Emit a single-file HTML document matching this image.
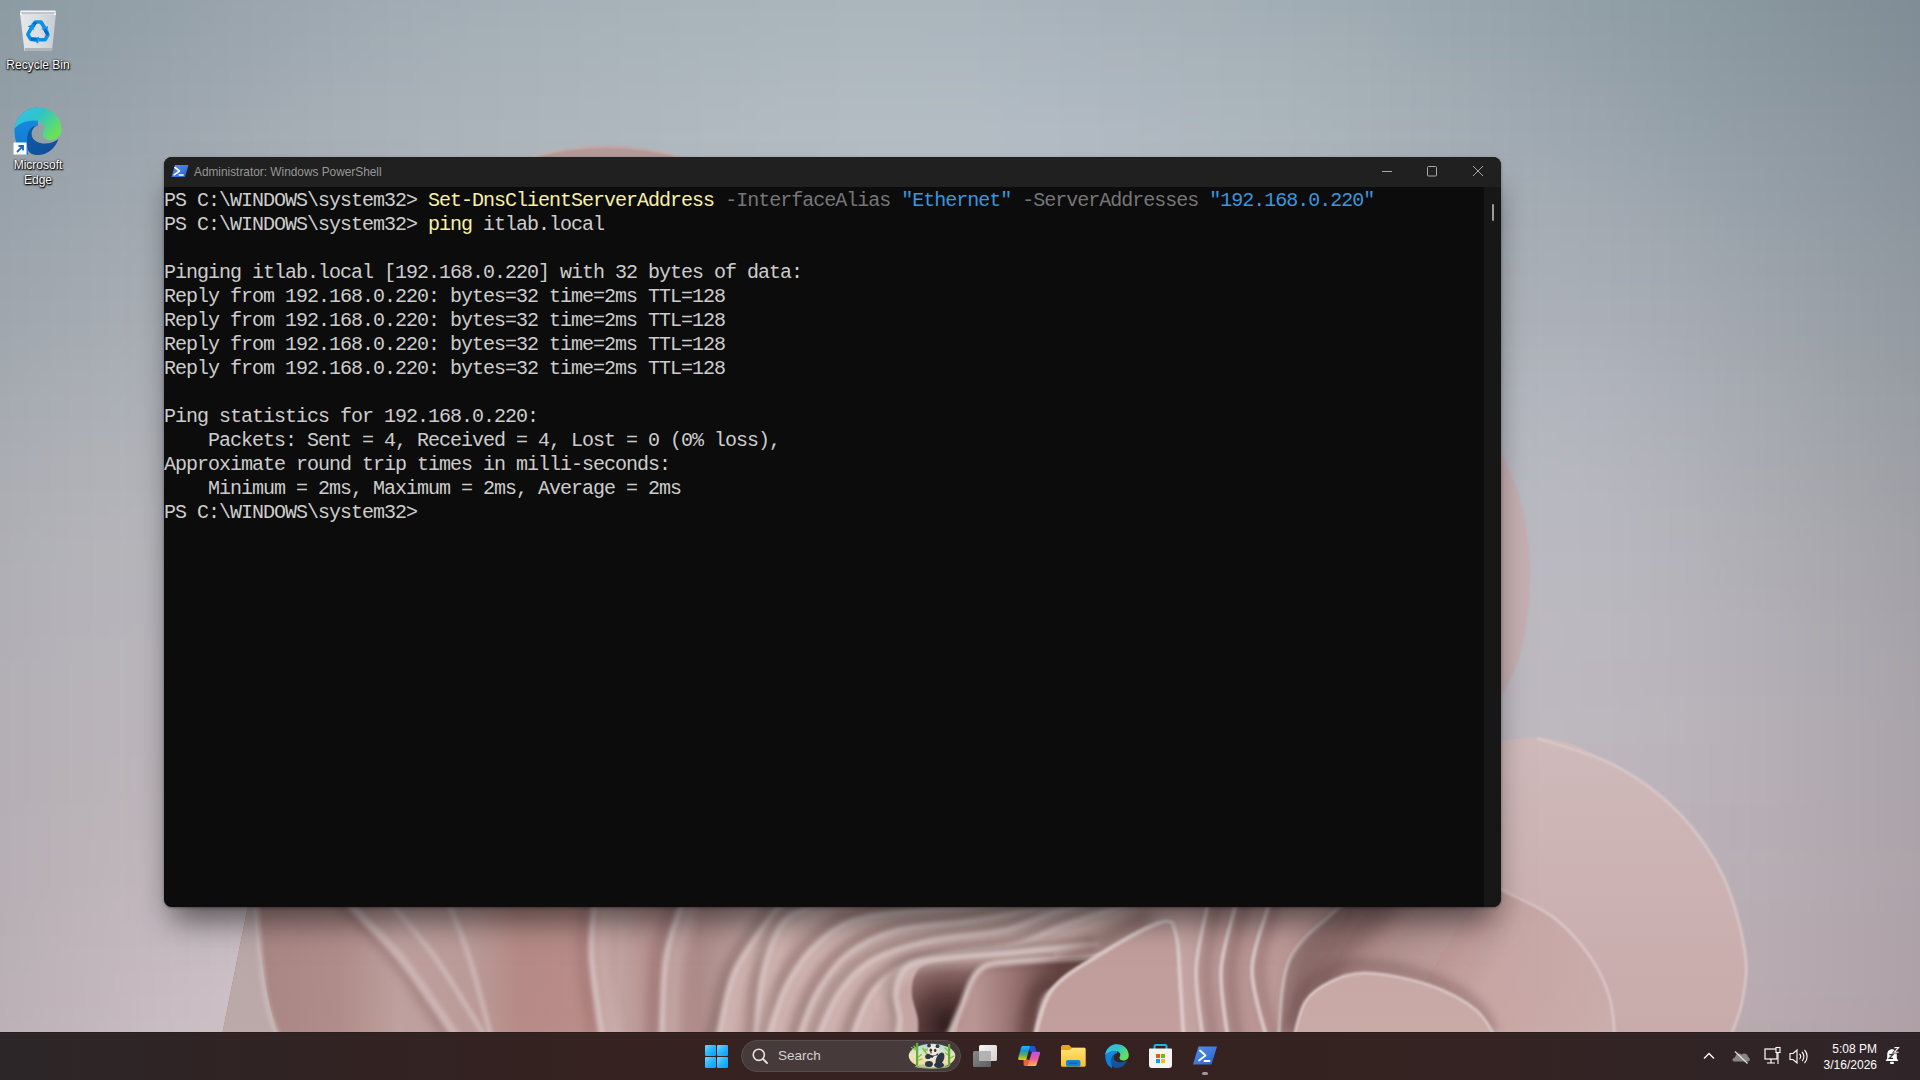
<!DOCTYPE html>
<html><head><meta charset="utf-8">
<style>
html,body{margin:0;padding:0;width:1920px;height:1080px;overflow:hidden;}
body{position:relative;font-family:"Liberation Sans",sans-serif;background:#aab2b8;}
#bgf{position:absolute;left:-80px;top:-48px;width:2080px;height:1176px;filter:blur(10px);}
#bgf div{position:absolute;left:0;width:2080px;height:12px;}
#flower{position:absolute;left:0;top:0;}
.abs{position:absolute;}
svg.abs{overflow:visible;}
/* desktop icons */
.dlabel{position:absolute;color:#fff;font-size:12px;line-height:15px;text-align:center;text-shadow:0 0 2px #000,0 1px 2px #000,1px 1px 1px rgba(0,0,0,.8);white-space:nowrap;}
/* window */
#shadow{position:absolute;left:164px;top:157px;width:1337px;height:750px;border-radius:8px;box-shadow:0 22px 30px -8px rgba(0,0,0,0.55),0 1px 3px rgba(0,0,0,0.35);}
#win{position:absolute;left:164px;top:157px;width:1337px;height:750px;border-radius:8px;overflow:hidden;background:#0c0c0c;}
#title{position:absolute;left:0;top:0;width:1337px;height:30px;background:#202020;}
#title .t{position:absolute;left:30px;top:8px;font-size:11.85px;color:#979797;white-space:nowrap;}
#term{position:absolute;left:0;top:30px;width:1320px;height:720px;background:#0c0c0c;}
#sb{position:absolute;left:1320px;top:30px;width:17px;height:720px;background:#171717;}
#thumb{position:absolute;left:8px;top:17px;width:2px;height:17px;background:#9b9b9b;border-radius:1px;}
pre{margin:0;position:absolute;left:0;top:2px;font-family:"Liberation Mono",monospace;font-size:20px;letter-spacing:-1px;line-height:24px;color:#cccccc;white-space:pre;}
.y{color:#f9f1a5}.g{color:#767676}.b{color:#3a96dd}
/* taskbar */
#taskbar{position:absolute;left:0;top:1032px;width:1920px;height:48px;background:linear-gradient(90deg,#2c2628 0px,#312323 300px,#362221 650px,#352221 1100px,#342322 1500px,#302427 1800px,#2f2529 1920px);border-top:1px solid #2b1e1e;box-sizing:border-box;}
#search{position:absolute;left:741px;top:1040px;width:220px;height:32px;box-sizing:border-box;border-radius:16px;background:#473a3a;border:1px solid #5a4c4c;}
#search .t{position:absolute;left:36px;top:7px;font-size:13.5px;color:#d6d0d0;}
.tray{position:absolute;color:#fff;font-size:12px;text-align:right;white-space:nowrap;}
</style></head>
<body>
<div id="bgf"><div style="top:0px;background:linear-gradient(90deg,#86969f 0px,#8999a1 80px,#8d9ca4 160px,#929fa8 240px,#96a2ab 320px,#9aa6af 400px,#9ea9b1 480px,#a0acb4 560px,#a2aeb5 640px,#a4afb7 720px,#a5b1b8 800px,#a6b2b9 880px,#a7b2b9 960px,#a6b2b9 1040px,#a5b0b8 1120px,#a3afb6 1200px,#a1adb5 1280px,#9eabb2 1360px,#9ba8af 1440px,#97a4ac 1520px,#92a0a8 1600px,#8e9ca4 1680px,#8998a0 1760px,#85949c 1840px,#818f98 1920px,#7d8b94 2000px,#798790 2080px)"></div><div style="top:12px;background:linear-gradient(90deg,#87969f 0px,#8a99a2 80px,#8e9ca5 160px,#929fa8 240px,#97a3ac 320px,#9ba6af 400px,#9faab2 480px,#a1acb4 560px,#a3aeb6 640px,#a5b0b7 720px,#a6b1b9 800px,#a7b3ba 880px,#a8b3ba 960px,#a7b3ba 1040px,#a6b1b9 1120px,#a4afb7 1200px,#a2aeb5 1280px,#9facb3 1360px,#9ca9b0 1440px,#98a5ac 1520px,#93a1a8 1600px,#8f9da5 1680px,#8a99a1 1760px,#86949d 1840px,#829098 1920px,#7e8b94 2000px,#7a8790 2080px)"></div><div style="top:24px;background:linear-gradient(90deg,#87979f 0px,#8b9aa2 80px,#8f9da5 160px,#93a0a9 240px,#98a3ac 320px,#9ca7b0 400px,#9faab2 480px,#a2adb5 560px,#a4afb7 640px,#a5b1b8 720px,#a7b2b9 800px,#a8b3ba 880px,#a8b4bb 960px,#a8b3bb 1040px,#a7b2ba 1120px,#a5b0b8 1200px,#a3aeb6 1280px,#a0acb4 1360px,#9da9b1 1440px,#99a6ad 1520px,#94a2a9 1600px,#8f9ea5 1680px,#8b99a1 1760px,#87959d 1840px,#839099 1920px,#7e8c95 2000px,#7a8891 2080px)"></div><div style="top:36px;background:linear-gradient(90deg,#8897a0 0px,#8c9aa2 80px,#8f9da5 160px,#94a0a9 240px,#99a4ad 320px,#9da8b0 400px,#a0abb3 480px,#a3aeb5 560px,#a5b0b7 640px,#a6b1b8 720px,#a8b3ba 800px,#a9b4bb 880px,#a9b5bb 960px,#a9b4bb 1040px,#a8b3ba 1120px,#a6b1b9 1200px,#a4afb7 1280px,#a1adb4 1360px,#9eaab1 1440px,#9aa6ae 1520px,#95a2aa 1600px,#909ea6 1680px,#8c9aa2 1760px,#87959e 1840px,#839199 1920px,#7f8c95 2000px,#7b8891 2080px)"></div><div style="top:48px;background:linear-gradient(90deg,#8998a0 0px,#8c9ba3 80px,#909ea6 160px,#95a1a9 240px,#9aa5ad 320px,#9ea8b1 400px,#a1acb4 480px,#a4aeb6 560px,#a6b0b8 640px,#a7b2b9 720px,#a8b3ba 800px,#aab5bb 880px,#aab5bc 960px,#aab5bc 1040px,#a9b3bb 1120px,#a7b1b9 1200px,#a5b0b7 1280px,#a2aeb5 1360px,#9fabb2 1440px,#9ba7ae 1520px,#96a3aa 1600px,#919fa7 1680px,#8d9ba3 1760px,#88969e 1840px,#84919a 1920px,#808d96 2000px,#7c8992 2080px)"></div><div style="top:60px;background:linear-gradient(90deg,#8998a0 0px,#8d9ba3 80px,#919ea6 160px,#96a2aa 240px,#9aa5ae 320px,#9fa9b1 400px,#a2acb4 480px,#a5afb6 560px,#a6b1b8 640px,#a8b3ba 720px,#a9b4bb 800px,#aab5bc 880px,#abb6bd 960px,#abb6bd 1040px,#aab4bc 1120px,#a8b2ba 1200px,#a6b1b8 1280px,#a3afb6 1360px,#a0acb3 1440px,#9ba8af 1520px,#97a4ab 1600px,#929fa7 1680px,#8d9ba3 1760px,#89979f 1840px,#85929a 1920px,#818d96 2000px,#7c8992 2080px)"></div><div style="top:72px;background:linear-gradient(90deg,#8a99a1 0px,#8e9ba4 80px,#929fa7 160px,#96a2aa 240px,#9ba6ae 320px,#a0a9b2 400px,#a3adb5 480px,#a5b0b7 560px,#a7b2b9 640px,#a9b3ba 720px,#aab5bb 800px,#abb6bd 880px,#acb7be 960px,#acb6be 1040px,#abb5bd 1120px,#a9b3bb 1200px,#a7b1b9 1280px,#a4afb7 1360px,#a1acb3 1440px,#9ca8b0 1520px,#98a4ac 1600px,#93a0a8 1680px,#8e9ca4 1760px,#8a979f 1840px,#86939b 1920px,#818e97 2000px,#7d8992 2080px)"></div><div style="top:84px;background:linear-gradient(90deg,#8b99a1 0px,#8e9ca4 80px,#929fa7 160px,#97a3ab 240px,#9ca6af 320px,#a0aab2 400px,#a4aeb5 480px,#a6b0b7 560px,#a8b2b9 640px,#a9b4bb 720px,#abb5bc 800px,#acb7bd 880px,#adb7be 960px,#adb7bf 1040px,#acb6be 1120px,#aab4bc 1200px,#a8b2ba 1280px,#a5b0b7 1360px,#a2adb4 1440px,#9da9b0 1520px,#99a5ad 1600px,#94a1a9 1680px,#8f9ca4 1760px,#8b98a0 1840px,#86939b 1920px,#828e97 2000px,#7e8a93 2080px)"></div><div style="top:96px;background:linear-gradient(90deg,#8b99a2 0px,#8f9ca5 80px,#939fa8 160px,#98a3ab 240px,#9da7af 320px,#a1abb3 400px,#a5aeb6 480px,#a7b1b8 560px,#a9b3ba 640px,#aab4bb 720px,#acb6bd 800px,#adb7be 880px,#aeb8bf 960px,#aeb8bf 1040px,#adb6be 1120px,#abb5bc 1200px,#a9b3ba 1280px,#a6b1b8 1360px,#a3aeb5 1440px,#9eaab1 1520px,#9aa6ad 1600px,#95a1a9 1680px,#909da5 1760px,#8b98a0 1840px,#87949c 1920px,#838f98 2000px,#7e8a93 2080px)"></div><div style="top:108px;background:linear-gradient(90deg,#8c9aa2 0px,#909da5 80px,#94a0a8 160px,#99a4ac 240px,#9ea7b0 320px,#a2abb3 400px,#a5afb6 480px,#a8b1b8 560px,#aab3ba 640px,#abb5bc 720px,#acb6bd 800px,#aeb8be 880px,#afb9bf 960px,#afb9c0 1040px,#adb7bf 1120px,#acb5bd 1200px,#aab4bb 1280px,#a7b2b9 1360px,#a4aeb5 1440px,#9faab2 1520px,#9ba6ae 1600px,#96a2aa 1680px,#919ea6 1760px,#8c99a1 1840px,#88949c 1920px,#848f98 2000px,#7f8b94 2080px)"></div><div style="top:120px;background:linear-gradient(90deg,#8d9aa2 0px,#919da5 80px,#95a0a9 160px,#9aa4ac 240px,#9fa8b0 320px,#a3acb4 400px,#a6afb7 480px,#a9b2b9 560px,#aab4bb 640px,#acb5bc 720px,#adb7be 800px,#afb8bf 880px,#afb9c0 960px,#b0b9c1 1040px,#aeb8c0 1120px,#acb6be 1200px,#aab4bc 1280px,#a8b2b9 1360px,#a4afb6 1440px,#a0abb2 1520px,#9ca7af 1600px,#97a3ab 1680px,#929ea6 1760px,#8d9aa2 1840px,#89959d 1920px,#849098 2000px,#808b94 2080px)"></div><div style="top:132px;background:linear-gradient(90deg,#8d9ba3 0px,#919ea6 80px,#95a1a9 160px,#9aa5ad 240px,#9fa9b1 320px,#a4acb4 400px,#a7b0b7 480px,#a9b2b9 560px,#abb4bb 640px,#adb6bd 720px,#aeb8be 800px,#afb9bf 880px,#b0bac1 960px,#b0bac1 1040px,#afb9c1 1120px,#adb7bf 1200px,#abb5bc 1280px,#a9b3ba 1360px,#a5b0b7 1440px,#a1acb3 1520px,#9da7af 1600px,#98a3ab 1680px,#939fa7 1760px,#8e9aa2 1840px,#8a959e 1920px,#859099 2000px,#818c95 2080px)"></div><div style="top:144px;background:linear-gradient(90deg,#8e9ba3 0px,#929ea6 80px,#96a1aa 160px,#9ba5ad 240px,#a0a9b1 320px,#a5adb5 400px,#a8b0b8 480px,#aab3ba 560px,#acb5bc 640px,#adb7bd 720px,#afb8bf 800px,#b0bac0 880px,#b1bbc1 960px,#b1bbc2 1040px,#b0b9c1 1120px,#aeb7bf 1200px,#acb6bd 1280px,#aab4bb 1360px,#a6b0b7 1440px,#a2acb4 1520px,#9ea8b0 1600px,#99a4ac 1680px,#93a0a8 1760px,#8f9ba3 1840px,#8a969e 1920px,#869199 2000px,#818c95 2080px)"></div><div style="top:156px;background:linear-gradient(90deg,#8f9ba4 0px,#939ea7 80px,#97a2aa 160px,#9ca6ae 240px,#a1aab2 320px,#a6aeb5 400px,#a9b1b8 480px,#abb3ba 560px,#acb5bc 640px,#aeb7bd 720px,#afb9bf 800px,#b1bac0 880px,#b2bbc2 960px,#b2bbc3 1040px,#b1bac2 1120px,#afb8c0 1200px,#adb6be 1280px,#aab4bb 1360px,#a7b1b8 1440px,#a3adb4 1520px,#9ea9b1 1600px,#9aa5ad 1680px,#94a0a8 1760px,#909ba4 1840px,#8b969f 1920px,#87919a 2000px,#828d95 2080px)"></div><div style="top:168px;background:linear-gradient(90deg,#909ca4 0px,#939fa7 80px,#98a2ab 160px,#9da6ae 240px,#a2aab2 320px,#a6aeb6 400px,#a9b1b9 480px,#acb4bb 560px,#adb6bc 640px,#afb7be 720px,#b0b9bf 800px,#b1bbc1 880px,#b2bcc2 960px,#b3bcc3 1040px,#b2bbc3 1120px,#b0b9c1 1200px,#aeb7be 1280px,#abb5bc 1360px,#a8b1b8 1440px,#a4adb5 1520px,#9fa9b1 1600px,#9ba5ae 1680px,#95a1a9 1760px,#919ca4 1840px,#8c979f 1920px,#87929a 2000px,#838d96 2080px)"></div><div style="top:180px;background:linear-gradient(90deg,#909ca5 0px,#949fa8 80px,#99a3ab 160px,#9ea7af 240px,#a3abb3 320px,#a7afb6 400px,#aab2b9 480px,#acb4bb 560px,#aeb6bd 640px,#afb8be 720px,#b1bac0 800px,#b2bbc1 880px,#b3bcc3 960px,#b3bcc4 1040px,#b2bbc3 1120px,#b0b9c1 1200px,#aeb8bf 1280px,#acb5bc 1360px,#a8b2b9 1440px,#a4aeb5 1520px,#a0aab2 1600px,#9ca6ae 1680px,#96a2aa 1760px,#919da5 1840px,#8d98a0 1920px,#88929b 2000px,#838e96 2080px)"></div><div style="top:192px;background:linear-gradient(90deg,#919da5 0px,#95a0a8 80px,#99a3ac 160px,#9ea7af 240px,#a3abb3 320px,#a8afb7 400px,#abb2b9 480px,#adb5bb 560px,#afb7bd 640px,#b0b8bf 720px,#b1bac0 800px,#b3bbc2 880px,#b4bdc3 960px,#b4bdc4 1040px,#b3bcc4 1120px,#b1bac2 1200px,#afb8bf 1280px,#adb6bd 1360px,#a9b2b9 1440px,#a5aeb6 1520px,#a1aab3 1600px,#9da7af 1680px,#97a2aa 1760px,#929da5 1840px,#8e98a0 1920px,#89939b 2000px,#848e97 2080px)"></div><div style="top:204px;background:linear-gradient(90deg,#929da5 0px,#96a0a8 80px,#9aa4ac 160px,#9fa8b0 240px,#a4acb4 320px,#a8b0b7 400px,#abb3ba 480px,#aeb5bc 560px,#afb7bd 640px,#b1b9bf 720px,#b2bac1 800px,#b3bcc2 880px,#b4bdc4 960px,#b5bdc5 1040px,#b4bcc4 1120px,#b2bac2 1200px,#b0b9c0 1280px,#adb6bd 1360px,#aab3ba 1440px,#a6afb6 1520px,#a2abb3 1600px,#9ea7af 1680px,#98a3ab 1760px,#939ea6 1840px,#8e99a1 1920px,#89939c 2000px,#858f97 2080px)"></div><div style="top:216px;background:linear-gradient(90deg,#939ea6 0px,#96a1a9 80px,#9ba4ac 160px,#a0a8b0 240px,#a5acb4 320px,#a9b0b8 400px,#acb3ba 480px,#aeb6bc 560px,#b0b7be 640px,#b1b9bf 720px,#b3bbc1 800px,#b4bcc3 880px,#b5bdc4 960px,#b5bec5 1040px,#b4bdc5 1120px,#b2bbc2 1200px,#b0b9c0 1280px,#aeb7bd 1360px,#abb3ba 1440px,#a7afb7 1520px,#a3abb4 1600px,#9fa8b0 1680px,#9aa4ac 1760px,#949fa7 1840px,#8f99a1 1920px,#8a949c 2000px,#858f97 2080px)"></div><div style="top:228px;background:linear-gradient(90deg,#939ea6 0px,#97a1a9 80px,#9ca5ad 160px,#a1a9b1 240px,#a6adb5 320px,#aab0b8 400px,#adb4ba 480px,#afb6bc 560px,#b0b8be 640px,#b2bac0 720px,#b3bbc1 800px,#b4bdc3 880px,#b5bec4 960px,#b6bec5 1040px,#b5bdc5 1120px,#b3bbc3 1200px,#b1b9c0 1280px,#aeb7be 1360px,#abb4ba 1440px,#a7b0b7 1520px,#a4acb4 1600px,#a0a9b1 1680px,#9ba4ac 1760px,#959fa7 1840px,#909aa2 1920px,#8b949d 2000px,#868f98 2080px)"></div><div style="top:240px;background:linear-gradient(90deg,#949ea7 0px,#98a2aa 80px,#9ca5ad 160px,#a1a9b1 240px,#a6adb5 320px,#aab1b8 400px,#adb4bb 480px,#afb6bd 560px,#b1b8be 640px,#b2bac0 720px,#b4bbc2 800px,#b5bdc3 880px,#b6bec5 960px,#b6bec6 1040px,#b5bdc5 1120px,#b4bcc3 1200px,#b2bac1 1280px,#afb7be 1360px,#acb4bb 1440px,#a8b0b7 1520px,#a4acb4 1600px,#a1a9b1 1680px,#9ca5ad 1760px,#96a0a8 1840px,#919aa2 1920px,#8c959d 2000px,#879098 2080px)"></div><div style="top:252px;background:linear-gradient(90deg,#959fa7 0px,#99a2aa 80px,#9da6ae 160px,#a2aab2 240px,#a7aeb5 320px,#abb1b9 400px,#aeb4bb 480px,#b0b7bd 560px,#b2b8bf 640px,#b3bac0 720px,#b4bcc2 800px,#b5bdc3 880px,#b6bec5 960px,#b7bec6 1040px,#b6bec5 1120px,#b4bcc3 1200px,#b2bac1 1280px,#b0b8be 1360px,#acb4bb 1440px,#a9b0b8 1520px,#a5adb5 1600px,#a2aab2 1680px,#9da6ae 1760px,#97a0a8 1840px,#929ba3 1920px,#8c959e 2000px,#889099 2080px)"></div><div style="top:264px;background:linear-gradient(90deg,#959fa7 0px,#99a3ab 80px,#9ea6ae 160px,#a3aab2 240px,#a8aeb6 320px,#acb2b9 400px,#aeb5bb 480px,#b0b7bd 560px,#b2b9bf 640px,#b3bac1 720px,#b5bcc2 800px,#b6bdc4 880px,#b7bec5 960px,#b7bfc6 1040px,#b6bec5 1120px,#b5bcc4 1200px,#b3bac1 1280px,#b0b8be 1360px,#adb5bb 1440px,#a9b1b8 1520px,#a6adb5 1600px,#a3aab3 1680px,#9ea6ae 1760px,#98a1a9 1840px,#939ba3 1920px,#8d969e 2000px,#889199 2080px)"></div><div style="top:276px;background:linear-gradient(90deg,#96a0a8 0px,#9aa3ab 80px,#9fa7af 160px,#a4abb2 240px,#a8aeb6 320px,#acb2b9 400px,#afb5bc 480px,#b1b7be 560px,#b3b9bf 640px,#b4bbc1 720px,#b5bcc2 800px,#b6bec4 880px,#b7bfc5 960px,#b7bfc6 1040px,#b7bec6 1120px,#b5bdc4 1200px,#b3bbc1 1280px,#b1b8bf 1360px,#aeb5bb 1440px,#aab1b8 1520px,#a7aeb6 1600px,#a4abb3 1680px,#9fa7af 1760px,#99a2aa 1840px,#939ca4 1920px,#8e969e 2000px,#899199 2080px)"></div><div style="top:288px;background:linear-gradient(90deg,#97a0a8 0px,#9ba3ac 80px,#9fa7af 160px,#a4abb3 240px,#a9afb6 320px,#adb2ba 400px,#b0b5bc 480px,#b2b8be 560px,#b3b9bf 640px,#b4bbc1 720px,#b6bdc3 800px,#b7bec4 880px,#b8bfc5 960px,#b8bfc6 1040px,#b7bec6 1120px,#b6bdc4 1200px,#b4bbc1 1280px,#b1b8bf 1360px,#aeb5bc 1440px,#abb1b9 1520px,#a8aeb6 1600px,#a5acb4 1680px,#a0a8b0 1760px,#9aa2aa 1840px,#949ca4 1920px,#8f979f 2000px,#8a929a 2080px)"></div><div style="top:300px;background:linear-gradient(90deg,#98a1a9 0px,#9ca4ac 80px,#a0a8b0 160px,#a5acb3 240px,#aaafb7 320px,#adb3ba 400px,#b0b6bc 480px,#b2b8be 560px,#b4bac0 640px,#b5bbc1 720px,#b6bdc3 800px,#b7bec4 880px,#b8bfc6 960px,#b8bfc6 1040px,#b7bec6 1120px,#b6bdc4 1200px,#b4bbc2 1280px,#b2b9bf 1360px,#afb5bc 1440px,#abb2b9 1520px,#a8afb6 1600px,#a5acb4 1680px,#a1a8b0 1760px,#9ba3ab 1840px,#959da5 1920px,#8f979f 2000px,#8a929a 2080px)"></div><div style="top:312px;background:linear-gradient(90deg,#99a1a9 0px,#9da4ac 80px,#a1a8b0 160px,#a6acb4 240px,#aab0b7 320px,#aeb3ba 400px,#b1b6bc 480px,#b3b8be 560px,#b4bac0 640px,#b5bbc1 720px,#b7bdc3 800px,#b8bec4 880px,#b8bfc6 960px,#b9bfc6 1040px,#b8bfc6 1120px,#b6bdc4 1200px,#b4bbc2 1280px,#b2b9bf 1360px,#afb6bc 1440px,#acb2b9 1520px,#a9afb7 1600px,#a6adb5 1680px,#a2a9b1 1760px,#9ca3ab 1840px,#969ea5 1920px,#9098a0 2000px,#8b929a 2080px)"></div><div style="top:324px;background:linear-gradient(90deg,#99a2a9 0px,#9da5ad 80px,#a2a9b0 160px,#a7adb4 240px,#abb0b7 320px,#afb4ba 400px,#b1b6bd 480px,#b3b8be 560px,#b5bac0 640px,#b6bcc2 720px,#b7bdc3 800px,#b8bec4 880px,#b9bfc6 960px,#b9bfc6 1040px,#b8bfc6 1120px,#b7bdc4 1200px,#b5bbc2 1280px,#b2b9bf 1360px,#b0b6bd 1440px,#adb3ba 1520px,#aab0b7 1600px,#a7adb6 1680px,#a3a9b2 1760px,#9da4ac 1840px,#979ea6 1920px,#9198a0 2000px,#8c939b 2080px)"></div><div style="top:336px;background:linear-gradient(90deg,#9aa2aa 0px,#9ea5ad 80px,#a3a9b1 160px,#a7adb4 240px,#acb1b8 320px,#afb4bb 400px,#b2b6bd 480px,#b4b9bf 560px,#b5bac0 640px,#b6bcc2 720px,#b7bdc3 800px,#b8bfc5 880px,#b9bfc6 960px,#b9bfc6 1040px,#b8bfc6 1120px,#b7bdc4 1200px,#b5bbc2 1280px,#b3b9bf 1360px,#b0b6bd 1440px,#adb3ba 1520px,#abb0b8 1600px,#a8aeb6 1680px,#a4aab2 1760px,#9ea5ac 1840px,#989fa6 1920px,#9299a1 2000px,#8d939b 2080px)"></div><div style="top:348px;background:linear-gradient(90deg,#9ba3aa 0px,#9fa6ae 80px,#a4aab1 160px,#a8aeb5 240px,#acb1b8 320px,#b0b4bb 400px,#b2b7bd 480px,#b4b9bf 560px,#b5bac0 640px,#b7bcc2 720px,#b8bdc3 800px,#b9bfc5 880px,#b9bfc6 960px,#b9c0c6 1040px,#b9bfc6 1120px,#b7bdc4 1200px,#b6bcc2 1280px,#b3b9c0 1360px,#b1b7bd 1440px,#aeb4bb 1520px,#abb1b8 1600px,#a9afb7 1680px,#a5abb3 1760px,#9fa5ad 1840px,#989fa7 1920px,#9299a1 2000px,#8d949c 2080px)"></div><div style="top:360px;background:linear-gradient(90deg,#9ca3ab 0px,#a0a6ae 80px,#a4aab2 160px,#a9aeb5 240px,#adb2b8 320px,#b0b5bb 400px,#b3b7bd 480px,#b4b9bf 560px,#b6bbc0 640px,#b7bcc2 720px,#b8bec3 800px,#b9bfc5 880px,#babfc6 960px,#bac0c6 1040px,#b9bfc6 1120px,#b8bec4 1200px,#b6bcc2 1280px,#b4b9c0 1360px,#b1b7bd 1440px,#afb4bb 1520px,#acb1b9 1600px,#aaafb7 1680px,#a6abb3 1760px,#a0a6ad 1840px,#99a0a7 1920px,#939aa1 2000px,#8e949c 2080px)"></div><div style="top:372px;background:linear-gradient(90deg,#9ca4ab 0px,#a1a7ae 80px,#a5abb2 160px,#aaafb6 240px,#aeb2b9 320px,#b1b5bb 400px,#b3b7be 480px,#b5b9bf 560px,#b6bbc1 640px,#b7bcc2 720px,#b9bec3 800px,#b9bfc5 880px,#babfc6 960px,#bac0c6 1040px,#b9bfc6 1120px,#b8bec4 1200px,#b6bcc2 1280px,#b4bac0 1360px,#b2b7be 1440px,#b0b5bc 1520px,#adb2ba 1600px,#abb0b8 1680px,#a7acb4 1760px,#a1a6ae 1840px,#9aa0a8 1920px,#949aa2 2000px,#8f959c 2080px)"></div><div style="top:384px;background:linear-gradient(90deg,#9da4ab 0px,#a2a8af 80px,#a6abb3 160px,#abafb6 240px,#aeb2b9 320px,#b2b5bc 400px,#b4b7be 480px,#b5b9bf 560px,#b7bbc1 640px,#b8bcc2 720px,#b9bec3 800px,#babfc5 880px,#babfc6 960px,#bac0c6 1040px,#b9bfc5 1120px,#b8bec4 1200px,#b7bcc2 1280px,#b5bac0 1360px,#b3b8be 1440px,#b0b5bc 1520px,#aeb3bb 1600px,#acb1b9 1680px,#a8acb4 1760px,#a1a7ae 1840px,#9ba1a8 1920px,#959ba2 2000px,#8f959d 2080px)"></div><div style="top:396px;background:linear-gradient(90deg,#9ea4ac 0px,#a2a8af 80px,#a7acb3 160px,#abb0b6 240px,#afb3b9 320px,#b2b5bc 400px,#b4b8be 480px,#b6b9bf 560px,#b7bbc1 640px,#b8bcc2 720px,#b9bec3 800px,#babfc5 880px,#babfc6 960px,#bac0c6 1040px,#babfc5 1120px,#b9bec4 1200px,#b7bcc2 1280px,#b5bac0 1360px,#b3b8be 1440px,#b1b6bd 1520px,#afb4bb 1600px,#adb1b9 1680px,#a8adb5 1760px,#a2a7af 1840px,#9ca1a8 1920px,#969ba2 2000px,#90959d 2080px)"></div><div style="top:408px;background:linear-gradient(90deg,#9fa5ac 0px,#a3a9b0 80px,#a8adb3 160px,#acb0b7 240px,#b0b3ba 320px,#b3b6bc 400px,#b5b8be 480px,#b6bac0 560px,#b7bbc1 640px,#b9bdc2 720px,#b9bec3 800px,#babfc5 880px,#bbbfc5 960px,#bbbfc6 1040px,#babfc5 1120px,#b9bec4 1200px,#b7bcc2 1280px,#b5bac0 1360px,#b4b8bf 1440px,#b2b6bd 1520px,#b0b4bc 1600px,#aeb2ba 1680px,#a9aeb6 1760px,#a3a8af 1840px,#9da2a9 1920px,#969ba3 2000px,#91969d 2080px)"></div><div style="top:420px;background:linear-gradient(90deg,#a0a5ad 0px,#a4a9b0 80px,#a9adb4 160px,#adb1b7 240px,#b0b4ba 320px,#b3b6bc 400px,#b5b8be 480px,#b7bac0 560px,#b8bbc1 640px,#b9bdc2 720px,#babec3 800px,#babfc5 880px,#bbbfc5 960px,#bbbfc6 1040px,#babfc5 1120px,#b9bec4 1200px,#b8bcc2 1280px,#b6bac0 1360px,#b4b8bf 1440px,#b3b7be 1520px,#b1b5bd 1600px,#afb3bb 1680px,#aaaeb6 1760px,#a4a8b0 1840px,#9da2a9 1920px,#979ca3 2000px,#92969e 2080px)"></div><div style="top:432px;background:linear-gradient(90deg,#a0a6ad 0px,#a5aab1 80px,#aaaeb4 160px,#aeb1b8 240px,#b1b4ba 320px,#b4b6bd 400px,#b6b8be 480px,#b7bac0 560px,#b8bbc1 640px,#b9bdc2 720px,#babec3 800px,#bbbfc4 880px,#bbbfc5 960px,#bbbfc5 1040px,#babfc5 1120px,#b9bec4 1200px,#b8bcc2 1280px,#b6bac0 1360px,#b5b9bf 1440px,#b3b7be 1520px,#b2b6be 1600px,#b0b3bb 1680px,#abafb7 1760px,#a5a9b0 1840px,#9ea3a9 1920px,#989ca3 2000px,#92979e 2080px)"></div><div style="top:444px;background:linear-gradient(90deg,#a1a6ad 0px,#a6aab1 80px,#aaaeb5 160px,#aeb2b8 240px,#b2b4bb 320px,#b4b7bd 400px,#b6b9bf 480px,#b8bac0 560px,#b9bbc1 640px,#b9bdc2 720px,#babec3 800px,#bbbfc4 880px,#bbbfc5 960px,#bbbfc5 1040px,#bbbfc5 1120px,#b9bec4 1200px,#b8bcc2 1280px,#b7bac1 1360px,#b5b9bf 1440px,#b4b8bf 1520px,#b3b6be 1600px,#b1b4bc 1680px,#acafb7 1760px,#a6a9b1 1840px,#9fa3aa 1920px,#999da4 2000px,#93979e 2080px)"></div><div style="top:456px;background:linear-gradient(90deg,#a2a7ae 0px,#a7abb1 80px,#abafb5 160px,#afb2b8 240px,#b2b5bb 320px,#b5b7bd 400px,#b7b9bf 480px,#b8bac0 560px,#b9bbc1 640px,#babdc2 720px,#bbbec3 800px,#bbbfc4 880px,#bbbfc5 960px,#bbbfc5 1040px,#bbbfc5 1120px,#babdc4 1200px,#b8bcc2 1280px,#b7bbc1 1360px,#b6b9c0 1440px,#b5b8bf 1520px,#b4b7bf 1600px,#b1b4bc 1680px,#adb0b8 1760px,#a7aab1 1840px,#a0a3aa 1920px,#9a9da4 2000px,#94979e 2080px)"></div><div style="top:468px;background:linear-gradient(90deg,#a3a7ae 0px,#a8abb2 80px,#acafb5 160px,#b0b2b9 240px,#b3b5bb 320px,#b5b7bd 400px,#b7b9bf 480px,#b8bac0 560px,#b9bbc1 640px,#babdc2 720px,#bbbec3 800px,#bbbfc4 880px,#bcbfc5 960px,#bbbfc5 1040px,#bbbec4 1120px,#babdc3 1200px,#b9bcc2 1280px,#b7bbc1 1360px,#b6b9c0 1440px,#b6b8c0 1520px,#b5b7bf 1600px,#b2b5bd 1680px,#aeb0b8 1760px,#a7aab1 1840px,#a1a4aa 1920px,#9a9ea4 2000px,#95989f 2080px)"></div><div style="top:480px;background:linear-gradient(90deg,#a3a8ae 0px,#a8acb2 80px,#adb0b6 160px,#b1b3b9 240px,#b4b5bb 320px,#b6b7bd 400px,#b8b9bf 480px,#b9bac0 560px,#babcc1 640px,#babdc2 720px,#bbbec3 800px,#bcbfc4 880px,#bcbfc5 960px,#bcbfc5 1040px,#bbbec4 1120px,#babdc3 1200px,#b9bcc2 1280px,#b8bbc1 1360px,#b7bac0 1440px,#b6b9c0 1520px,#b5b8c0 1600px,#b3b5bd 1680px,#afb0b8 1760px,#a8abb2 1840px,#a1a4ab 1920px,#9b9ea5 2000px,#95989f 2080px)"></div><div style="top:492px;background:linear-gradient(90deg,#a4a8af 0px,#a9acb2 80px,#aeb0b6 160px,#b1b3b9 240px,#b4b6bc 320px,#b6b8be 400px,#b8b9bf 480px,#b9bac0 560px,#babcc1 640px,#bbbdc2 720px,#bbbec3 800px,#bcbec4 880px,#bcbfc4 960px,#bcbfc5 1040px,#bbbec4 1120px,#babdc3 1200px,#b9bcc2 1280px,#b8bbc1 1360px,#b7bac0 1440px,#b7b9c0 1520px,#b6b8c0 1600px,#b4b5be 1680px,#afb1b9 1760px,#a9abb2 1840px,#a2a5ab 1920px,#9c9ea5 2000px,#96989f 2080px)"></div><div style="top:504px;background:linear-gradient(90deg,#a5a8af 0px,#aaadb3 80px,#afb1b7 160px,#b2b4ba 240px,#b5b6bc 320px,#b7b8be 400px,#b8b9bf 480px,#b9bbc0 560px,#babcc1 640px,#bbbdc2 720px,#bbbdc3 800px,#bcbec4 880px,#bcbfc4 960px,#bcbfc4 1040px,#bbbec4 1120px,#babdc3 1200px,#b9bcc2 1280px,#b9bbc1 1360px,#b8bac1 1440px,#b7b9c0 1520px,#b7b8c0 1600px,#b4b6be 1680px,#b0b1b9 1760px,#aaabb2 1840px,#a3a5ab 1920px,#9c9fa5 2000px,#9799a0 2080px)"></div><div style="top:516px;background:linear-gradient(90deg,#a5a9af 0px,#abadb3 80px,#afb1b7 160px,#b3b4ba 240px,#b5b6bc 320px,#b7b8be 400px,#b9b9bf 480px,#babbc0 560px,#bbbcc1 640px,#bbbcc2 720px,#bcbdc3 800px,#bcbec4 880px,#bcbfc4 960px,#bcbfc4 1040px,#bbbec4 1120px,#bbbdc3 1200px,#babcc2 1280px,#b9bbc1 1360px,#b8bac1 1440px,#b8bac1 1520px,#b7b9c0 1600px,#b5b6be 1680px,#b1b2b9 1760px,#aaacb2 1840px,#a4a5ab 1920px,#9d9fa5 2000px,#9799a0 2080px)"></div><div style="top:528px;background:linear-gradient(90deg,#a6a9af 0px,#abadb3 80px,#b0b1b7 160px,#b3b4ba 240px,#b6b7bc 320px,#b8b8be 400px,#b9babf 480px,#babbc0 560px,#bbbcc1 640px,#bbbcc2 720px,#bcbdc3 800px,#bcbec3 880px,#bcbfc4 960px,#bcbec4 1040px,#bcbec3 1120px,#bbbdc3 1200px,#babcc2 1280px,#b9bbc1 1360px,#b9bac1 1440px,#b9bac1 1520px,#b8b9c1 1600px,#b6b6be 1680px,#b1b2ba 1760px,#abacb3 1840px,#a4a6ac 1920px,#9e9fa6 2000px,#9899a0 2080px)"></div><div style="top:540px;background:linear-gradient(90deg,#a7a9b0 0px,#acaeb4 80px,#b1b2b7 160px,#b4b5ba 240px,#b6b7bd 320px,#b8b8be 400px,#babac0 480px,#bbbbc0 560px,#bbbbc1 640px,#bcbcc2 720px,#bcbdc3 800px,#bcbec3 880px,#bdbec4 960px,#bcbec4 1040px,#bcbec3 1120px,#bbbdc2 1200px,#babcc2 1280px,#babbc1 1360px,#b9bac1 1440px,#b9bac1 1520px,#b8b9c1 1600px,#b6b7bf 1680px,#b2b2ba 1760px,#acacb3 1840px,#a5a6ac 1920px,#9fa0a6 2000px,#999aa0 2080px)"></div><div style="top:552px;background:linear-gradient(90deg,#a7aab0 0px,#acaeb4 80px,#b1b2b8 160px,#b5b5bb 240px,#b7b7bd 320px,#b9b9be 400px,#babac0 480px,#bbbbc1 560px,#bbbbc1 640px,#bcbcc2 720px,#bcbdc2 800px,#bdbec3 880px,#bdbec3 960px,#bcbec3 1040px,#bcbdc3 1120px,#bbbcc2 1200px,#babcc2 1280px,#babbc1 1360px,#babac1 1440px,#b9bac1 1520px,#b9b9c1 1600px,#b7b7bf 1680px,#b3b3ba 1760px,#acadb3 1840px,#a6a6ac 1920px,#9fa0a6 2000px,#999aa1 2080px)"></div><div style="top:564px;background:linear-gradient(90deg,#a8aab0 0px,#adaeb4 80px,#b2b2b8 160px,#b5b5bb 240px,#b8b7bd 320px,#b9b9bf 400px,#bbbac0 480px,#bbbbc1 560px,#bcbbc1 640px,#bcbcc2 720px,#bcbdc2 800px,#bdbec3 880px,#bdbec3 960px,#bcbec3 1040px,#bcbdc3 1120px,#bbbcc2 1200px,#bbbbc1 1280px,#babbc1 1360px,#babac1 1440px,#babac1 1520px,#b9b9c1 1600px,#b7b7bf 1680px,#b3b3ba 1760px,#adadb3 1840px,#a6a7ad 1920px,#a0a0a7 2000px,#9a9aa1 2080px)"></div><div style="top:576px;background:linear-gradient(90deg,#a8aab0 0px,#aeaeb4 80px,#b2b2b8 160px,#b6b5bb 240px,#b8b7bd 320px,#bab9bf 400px,#bbbac0 480px,#bcbbc1 560px,#bcbbc1 640px,#bcbcc2 720px,#bdbdc2 800px,#bdbdc3 880px,#bdbec3 960px,#bdbec3 1040px,#bcbdc2 1120px,#bbbcc2 1200px,#bbbbc1 1280px,#babbc1 1360px,#babbc1 1440px,#babac1 1520px,#bab9c1 1600px,#b8b7bf 1680px,#b4b3ba 1760px,#aeadb4 1840px,#a7a7ad 1920px,#a1a1a7 2000px,#9a9ba1 2080px)"></div><div style="top:588px;background:linear-gradient(90deg,#a9aab0 0px,#aeafb4 80px,#b3b3b8 160px,#b6b6bb 240px,#b8b8bd 320px,#bab9bf 400px,#bbbac0 480px,#bcbbc1 560px,#bcbbc1 640px,#bcbcc2 720px,#bdbdc2 800px,#bdbdc3 880px,#bdbec3 960px,#bdbdc3 1040px,#bcbdc2 1120px,#bbbcc2 1200px,#bbbbc1 1280px,#bbbbc1 1360px,#bbbbc1 1440px,#bbbac1 1520px,#bab9c1 1600px,#b8b7bf 1680px,#b4b3bb 1760px,#aeaeb4 1840px,#a8a7ad 1920px,#a1a1a7 2000px,#9b9ba1 2080px)"></div><div style="top:600px;background:linear-gradient(90deg,#a9abb1 0px,#aeafb5 80px,#b3b3b8 160px,#b6b6bb 240px,#b9b8bd 320px,#bbb9bf 400px,#bcbac0 480px,#bcbbc1 560px,#bcbbc1 640px,#bdbcc1 720px,#bdbdc2 800px,#bdbdc2 880px,#bdbdc3 960px,#bdbdc2 1040px,#bcbdc2 1120px,#bcbcc1 1200px,#bbbbc1 1280px,#bbbbc1 1360px,#bbbac1 1440px,#bbbac1 1520px,#bbb9c1 1600px,#b9b7bf 1680px,#b5b3bb 1760px,#afaeb4 1840px,#a8a8ae 1920px,#a2a1a7 2000px,#9c9ba2 2080px)"></div><div style="top:612px;background:linear-gradient(90deg,#aaabb1 0px,#afafb5 80px,#b3b3b8 160px,#b7b6bb 240px,#b9b8be 320px,#bbb9bf 400px,#bcbac0 480px,#bdbbc1 560px,#bdbbc1 640px,#bdbcc1 720px,#bdbcc2 800px,#bdbdc2 880px,#bdbdc2 960px,#bdbdc2 1040px,#bcbcc2 1120px,#bcbcc1 1200px,#bbbbc1 1280px,#bbbbc1 1360px,#bbbac1 1440px,#bbbac1 1520px,#bbbac1 1600px,#b9b7bf 1680px,#b5b4bb 1760px,#b0aeb5 1840px,#a9a8ae 1920px,#a2a1a8 2000px,#9c9ba2 2080px)"></div><div style="top:624px;background:linear-gradient(90deg,#aaabb1 0px,#afafb5 80px,#b4b3b9 160px,#b7b6bc 240px,#bab8be 320px,#bcb9bf 400px,#bdbac0 480px,#bdbbc1 560px,#bdbbc1 640px,#bdbcc1 720px,#bdbcc2 800px,#bdbdc2 880px,#bdbdc2 960px,#bdbdc2 1040px,#bcbcc2 1120px,#bcbbc1 1200px,#bbbbc1 1280px,#bbbac1 1360px,#bcbac1 1440px,#bcbac1 1520px,#bbbac1 1600px,#b9b8bf 1680px,#b6b4bb 1760px,#b0aeb5 1840px,#aaa8ae 1920px,#a3a2a8 2000px,#9d9ca2 2080px)"></div><div style="top:636px;background:linear-gradient(90deg,#ababb1 0px,#b0afb5 80px,#b4b3b9 160px,#b8b6bc 240px,#bab8be 320px,#bcbabf 400px,#bdbac0 480px,#bdbbc1 560px,#bdbbc1 640px,#bdbbc1 720px,#bdbcc1 800px,#bdbdc2 880px,#bdbdc2 960px,#bdbdc2 1040px,#bcbcc1 1120px,#bcbbc1 1200px,#bbbac0 1280px,#bcbac1 1360px,#bcbac1 1440px,#bcbac1 1520px,#bcbac1 1600px,#bab8bf 1680px,#b6b4bb 1760px,#b1afb5 1840px,#aaa8ae 1920px,#a4a2a8 2000px,#9d9ca2 2080px)"></div><div style="top:648px;background:linear-gradient(90deg,#ababb1 0px,#b0afb5 80px,#b5b3b9 160px,#b8b6bc 240px,#bbb8be 320px,#bcbac0 400px,#bdbac0 480px,#bebbc1 560px,#bebbc1 640px,#bdbbc1 720px,#bebcc1 800px,#bebcc2 880px,#bdbdc2 960px,#bdbcc1 1040px,#bdbcc1 1120px,#bcbbc0 1200px,#bcbac0 1280px,#bcbac0 1360px,#bcbac1 1440px,#bcbac1 1520px,#bcb9c1 1600px,#bab8bf 1680px,#b7b4bb 1760px,#b1afb5 1840px,#aba8af 1920px,#a4a2a8 2000px,#9e9ca3 2080px)"></div><div style="top:660px;background:linear-gradient(90deg,#acabb1 0px,#b0afb5 80px,#b5b3b9 160px,#b8b6bc 240px,#bbb8be 320px,#bdbac0 400px,#bebbc0 480px,#bebbc1 560px,#bebbc1 640px,#bebbc1 720px,#bebcc1 800px,#bebcc1 880px,#bebcc1 960px,#bdbcc1 1040px,#bdbbc1 1120px,#bcbbc0 1200px,#bcbac0 1280px,#bcbac0 1360px,#bcbac1 1440px,#bdbac1 1520px,#bcb9c1 1600px,#bbb8bf 1680px,#b7b4bb 1760px,#b2afb6 1840px,#aba9af 1920px,#a5a2a9 2000px,#9f9ca3 2080px)"></div><div style="top:672px;background:linear-gradient(90deg,#acabb1 0px,#b1afb5 80px,#b5b3b9 160px,#b9b6bc 240px,#bbb8be 320px,#bdbac0 400px,#bebbc1 480px,#bebbc1 560px,#bebbc1 640px,#bebbc1 720px,#bebcc1 800px,#bebcc1 880px,#bebcc1 960px,#bdbcc1 1040px,#bdbbc0 1120px,#bcbac0 1200px,#bcbac0 1280px,#bcbac0 1360px,#bdbac1 1440px,#bdbac1 1520px,#bcb9c1 1600px,#bbb8bf 1680px,#b8b4bb 1760px,#b2afb6 1840px,#aca9af 1920px,#a5a2a9 2000px,#9f9ca3 2080px)"></div><div style="top:684px;background:linear-gradient(90deg,#acabb1 0px,#b1afb5 80px,#b6b3b9 160px,#b9b6bc 240px,#bcb8be 320px,#bebac0 400px,#bfbbc1 480px,#bfbbc1 560px,#bebbc1 640px,#bebbc1 720px,#bebbc1 800px,#bebcc1 880px,#bebcc1 960px,#bdbcc1 1040px,#bdbbc0 1120px,#bcbac0 1200px,#bcbac0 1280px,#bcbac0 1360px,#bdbac1 1440px,#bdbac1 1520px,#bdb9c1 1600px,#bbb8bf 1680px,#b8b4bb 1760px,#b3afb6 1840px,#aca9af 1920px,#a6a2a9 2000px,#a09ca3 2080px)"></div><div style="top:696px;background:linear-gradient(90deg,#adabb1 0px,#b1afb5 80px,#b6b3b9 160px,#bab6bc 240px,#bcb9be 320px,#bebac0 400px,#bfbbc1 480px,#bfbbc1 560px,#bfbbc1 640px,#bebbc1 720px,#bebbc1 800px,#bebcc1 880px,#bebcc1 960px,#bdbbc0 1040px,#bdbbc0 1120px,#bcbac0 1200px,#bcb9bf 1280px,#bcb9c0 1360px,#bdbac0 1440px,#bdbac1 1520px,#bdb9c0 1600px,#bcb8bf 1680px,#b8b4bb 1760px,#b3afb6 1840px,#ada9b0 1920px,#a6a3a9 2000px,#a09da3 2080px)"></div><div style="top:708px;background:linear-gradient(90deg,#adabb1 0px,#b2afb5 80px,#b6b3b9 160px,#bab6bc 240px,#bdb9bf 320px,#bebac0 400px,#bfbbc1 480px,#bfbbc1 560px,#bfbbc1 640px,#bfbbc1 720px,#bebbc1 800px,#bebbc1 880px,#bebbc1 960px,#bebbc0 1040px,#bdbac0 1120px,#bcbabf 1200px,#bcb9bf 1280px,#bdb9c0 1360px,#bdbac0 1440px,#bebac1 1520px,#bdb9c0 1600px,#bcb7bf 1680px,#b9b4bb 1760px,#b4afb6 1840px,#ada9b0 1920px,#a7a3a9 2000px,#a19da3 2080px)"></div><div style="top:720px;background:linear-gradient(90deg,#adabb1 0px,#b2afb5 80px,#b6b3b9 160px,#bab6bc 240px,#bdb9bf 320px,#bfbac0 400px,#c0bbc1 480px,#c0bbc1 560px,#bfbbc1 640px,#bfbbc0 720px,#bfbbc1 800px,#bebbc0 880px,#bebbc0 960px,#bebbc0 1040px,#bdbac0 1120px,#bdb9bf 1200px,#bcb9bf 1280px,#bdb9bf 1360px,#bdbac0 1440px,#bebac1 1520px,#bdb9c0 1600px,#bcb7bf 1680px,#b9b4bb 1760px,#b4afb6 1840px,#aea9b0 1920px,#a7a3a9 2000px,#a19da4 2080px)"></div><div style="top:732px;background:linear-gradient(90deg,#aeabb1 0px,#b2afb5 80px,#b7b3b9 160px,#bbb6bc 240px,#bdb9bf 320px,#bfbac0 400px,#c0bbc1 480px,#c0bbc1 560px,#c0bbc1 640px,#bfbbc0 720px,#bfbbc0 800px,#bfbbc0 880px,#bebbc0 960px,#bebbc0 1040px,#bdbabf 1120px,#bdb9bf 1200px,#bcb9bf 1280px,#bdb9bf 1360px,#beb9c0 1440px,#beb9c0 1520px,#beb9c0 1600px,#bcb7be 1680px,#b9b4bb 1760px,#b4afb6 1840px,#aea9b0 1920px,#a8a3aa 2000px,#a29da4 2080px)"></div><div style="top:744px;background:linear-gradient(90deg,#aeacb1 0px,#b3afb5 80px,#b7b3b9 160px,#bbb6bc 240px,#beb9bf 320px,#c0bac0 400px,#c1bbc1 480px,#c1bbc1 560px,#c0bbc1 640px,#bfbbc0 720px,#bfbbc0 800px,#bfbbc0 880px,#bebbc0 960px,#bebac0 1040px,#bdbabf 1120px,#bdb9bf 1200px,#bdb9bf 1280px,#bdb9bf 1360px,#beb9c0 1440px,#beb9c0 1520px,#beb9c0 1600px,#bcb7be 1680px,#bab4bb 1760px,#b5afb6 1840px,#afa9b0 1920px,#a8a3aa 2000px,#a29da4 2080px)"></div><div style="top:756px;background:linear-gradient(90deg,#aeacb1 0px,#b3afb5 80px,#b7b3b9 160px,#bbb6bc 240px,#beb9bf 320px,#c0bac1 400px,#c1bbc1 480px,#c1bbc1 560px,#c0bbc1 640px,#c0bbc0 720px,#bfbbc0 800px,#bfbbc0 880px,#bebbc0 960px,#bebabf 1040px,#bdbabf 1120px,#bdb9be 1200px,#bdb8be 1280px,#bdb9bf 1360px,#beb9c0 1440px,#beb9c0 1520px,#beb9c0 1600px,#bdb7be 1680px,#bab4bb 1760px,#b5afb6 1840px,#afa9b0 1920px,#a8a3aa 2000px,#a29da4 2080px)"></div><div style="top:768px;background:linear-gradient(90deg,#afacb1 0px,#b3afb5 80px,#b8b3b9 160px,#bcb6bc 240px,#bfb9bf 320px,#c1bbc1 400px,#c2bbc2 480px,#c1bbc1 560px,#c1bbc1 640px,#c0bbc0 720px,#c0bbc0 800px,#bfbbc0 880px,#bfbac0 960px,#bebabf 1040px,#beb9bf 1120px,#bdb9be 1200px,#bdb8be 1280px,#bdb9bf 1360px,#beb9bf 1440px,#beb9c0 1520px,#beb8bf 1600px,#bdb7be 1680px,#bab4bb 1760px,#b5afb6 1840px,#afa9b0 1920px,#a9a3aa 2000px,#a39da4 2080px)"></div><div style="top:780px;background:linear-gradient(90deg,#afacb1 0px,#b4afb5 80px,#b8b3b9 160px,#bcb6bc 240px,#bfb9bf 320px,#c1bbc1 400px,#c2bbc2 480px,#c2bbc2 560px,#c1bbc1 640px,#c0bbc0 720px,#c0bbc0 800px,#bfbbc0 880px,#bfbabf 960px,#bebabf 1040px,#beb9be 1120px,#bdb9be 1200px,#bdb8be 1280px,#beb8bf 1360px,#beb9bf 1440px,#bfb9c0 1520px,#beb8bf 1600px,#bdb7be 1680px,#bab4bb 1760px,#b6afb6 1840px,#b0a9b0 1920px,#a9a3aa 2000px,#a39da4 2080px)"></div><div style="top:792px;background:linear-gradient(90deg,#afacb1 0px,#b4afb5 80px,#b8b3b9 160px,#bcb6bc 240px,#c0b9bf 320px,#c2bbc1 400px,#c2bcc2 480px,#c2bcc2 560px,#c1bbc1 640px,#c1bbc0 720px,#c0bbc0 800px,#c0bac0 880px,#bfbabf 960px,#bebabf 1040px,#beb9be 1120px,#bdb8be 1200px,#bdb8be 1280px,#beb8be 1360px,#beb9bf 1440px,#bfb9bf 1520px,#beb8bf 1600px,#bdb6bd 1680px,#bab3ba 1760px,#b6afb6 1840px,#b0a9b0 1920px,#aaa3aa 2000px,#a49da4 2080px)"></div><div style="top:804px;background:linear-gradient(90deg,#b0acb1 0px,#b4afb5 80px,#b9b3b8 160px,#bdb6bc 240px,#c0b9bf 320px,#c2bbc1 400px,#c3bcc2 480px,#c3bcc2 560px,#c2bbc1 640px,#c1bbc1 720px,#c0bac0 800px,#c0bac0 880px,#bfbabf 960px,#beb9bf 1040px,#beb9be 1120px,#beb8be 1200px,#beb8be 1280px,#beb8be 1360px,#bfb8bf 1440px,#bfb8bf 1520px,#bfb8bf 1600px,#bdb6bd 1680px,#bbb3ba 1760px,#b6afb6 1840px,#b0a9b0 1920px,#aaa3aa 2000px,#a49da4 2080px)"></div><div style="top:816px;background:linear-gradient(90deg,#b0acb1 0px,#b4afb5 80px,#b9b3b8 160px,#bdb6bc 240px,#c0b9bf 320px,#c3bbc1 400px,#c3bcc2 480px,#c3bcc2 560px,#c2bbc1 640px,#c1bbc1 720px,#c1bac0 800px,#c0babf 880px,#bfbabf 960px,#bfb9be 1040px,#beb9be 1120px,#beb8be 1200px,#beb8be 1280px,#beb8be 1360px,#bfb8bf 1440px,#bfb8bf 1520px,#bfb8be 1600px,#bdb6bd 1680px,#bbb3ba 1760px,#b6afb6 1840px,#b1a9b0 1920px,#aaa3aa 2000px,#a59da4 2080px)"></div><div style="top:828px;background:linear-gradient(90deg,#b0acb1 0px,#b5afb5 80px,#b9b3b8 160px,#bdb6bc 240px,#c1b9c0 320px,#c3bbc2 400px,#c4bcc2 480px,#c4bcc2 560px,#c3bbc1 640px,#c2bbc1 720px,#c1bac0 800px,#c0babf 880px,#bfbabf 960px,#bfb9be 1040px,#beb9be 1120px,#beb8bd 1200px,#beb8be 1280px,#beb8be 1360px,#bfb8be 1440px,#bfb8bf 1520px,#bfb7be 1600px,#bdb6bd 1680px,#bbb3ba 1760px,#b7afb6 1840px,#b1a9b0 1920px,#aba3aa 2000px,#a59da4 2080px)"></div><div style="top:840px;background:linear-gradient(90deg,#b0acb1 0px,#b5afb5 80px,#b9b3b8 160px,#beb6bc 240px,#c1b9c0 320px,#c4bcc2 400px,#c4bcc3 480px,#c4bcc2 560px,#c3bbc2 640px,#c2bbc1 720px,#c1bac0 800px,#c0babf 880px,#c0b9bf 960px,#bfb9be 1040px,#beb8be 1120px,#beb8bd 1200px,#beb8bd 1280px,#bfb8be 1360px,#bfb8be 1440px,#bfb8be 1520px,#bfb7be 1600px,#beb5bc 1680px,#bbb3ba 1760px,#b7afb5 1840px,#b1a9b0 1920px,#aba3aa 2000px,#a59da4 2080px)"></div><div style="top:852px;background:linear-gradient(90deg,#b1acb1 0px,#b5afb5 80px,#bab3b8 160px,#beb6bc 240px,#c2bac0 320px,#c4bcc2 400px,#c5bcc3 480px,#c5bcc3 560px,#c4bcc2 640px,#c3bbc1 720px,#c2bac0 800px,#c1babf 880px,#c0b9be 960px,#bfb9be 1040px,#bfb8bd 1120px,#beb8bd 1200px,#beb7bd 1280px,#bfb8be 1360px,#bfb8be 1440px,#bfb8be 1520px,#bfb7be 1600px,#beb5bc 1680px,#bbb2b9 1760px,#b7aeb5 1840px,#b2a9b0 1920px,#aba3aa 2000px,#a69da4 2080px)"></div><div style="top:864px;background:linear-gradient(90deg,#b1acb1 0px,#b6afb5 80px,#bab3b8 160px,#bfb6bc 240px,#c3bac0 320px,#c5bcc2 400px,#c6bdc3 480px,#c5bcc3 560px,#c4bcc2 640px,#c3bbc1 720px,#c2bac0 800px,#c1babf 880px,#c0b9be 960px,#bfb9be 1040px,#bfb8bd 1120px,#bfb8bd 1200px,#bfb7bd 1280px,#bfb7bd 1360px,#bfb8be 1440px,#c0b7be 1520px,#bfb7bd 1600px,#beb5bc 1680px,#bbb2b9 1760px,#b7aeb5 1840px,#b2a9b0 1920px,#aca3aa 2000px,#a69da4 2080px)"></div><div style="top:876px;background:linear-gradient(90deg,#b1acb1 0px,#b6afb5 80px,#bbb3b8 160px,#bfb6bc 240px,#c3bac0 320px,#c5bcc3 400px,#c6bdc3 480px,#c6bdc3 560px,#c5bcc2 640px,#c3bbc1 720px,#c2bac0 800px,#c1babf 880px,#c0b9be 960px,#bfb9be 1040px,#bfb8bd 1120px,#bfb7bd 1200px,#bfb7bd 1280px,#bfb7bd 1360px,#c0b7be 1440px,#c0b7be 1520px,#bfb6bd 1600px,#beb5bc 1680px,#bbb2b9 1760px,#b7aeb5 1840px,#b2a9b0 1920px,#aca3aa 2000px,#a69da4 2080px)"></div><div style="top:888px;background:linear-gradient(90deg,#b2acb1 0px,#b6afb5 80px,#bbb3b8 160px,#c0b7bd 240px,#c4bac1 320px,#c6bcc3 400px,#c7bdc4 480px,#c6bdc3 560px,#c5bcc2 640px,#c4bbc1 720px,#c3bac0 800px,#c1babf 880px,#c0b9be 960px,#c0b8bd 1040px,#bfb8bd 1120px,#bfb7bd 1200px,#bfb7bd 1280px,#bfb7bd 1360px,#c0b7bd 1440px,#c0b7bd 1520px,#bfb6bd 1600px,#beb4bb 1680px,#bbb2b9 1760px,#b7aeb5 1840px,#b2a9af 1920px,#aca3aa 2000px,#a79da4 2080px)"></div><div style="top:900px;background:linear-gradient(90deg,#b2acb1 0px,#b6afb5 80px,#bbb3b8 160px,#c0b7bd 240px,#c4bbc1 320px,#c7bdc3 400px,#c7bdc4 480px,#c7bdc3 560px,#c5bcc2 640px,#c4bbc1 720px,#c3bac0 800px,#c2babf 880px,#c1b9be 960px,#c0b8bd 1040px,#bfb8bd 1120px,#bfb7bd 1200px,#bfb7bd 1280px,#c0b7bd 1360px,#c0b7bd 1440px,#c0b7bd 1520px,#bfb6bc 1600px,#beb4bb 1680px,#bbb1b8 1760px,#b8aeb4 1840px,#b2a9af 1920px,#ada3a9 2000px,#a79da4 2080px)"></div><div style="top:912px;background:linear-gradient(90deg,#b2acb1 0px,#b7afb5 80px,#bcb3b9 160px,#c1b7bd 240px,#c5bbc1 320px,#c7bdc4 400px,#c8bec4 480px,#c7bdc4 560px,#c6bcc3 640px,#c5bbc1 720px,#c3bbc0 800px,#c2babf 880px,#c1b9be 960px,#c0b8bd 1040px,#c0b8bd 1120px,#bfb7bd 1200px,#bfb7bd 1280px,#c0b7bd 1360px,#c0b7bd 1440px,#c0b7bd 1520px,#bfb6bc 1600px,#beb4bb 1680px,#bbb1b8 1760px,#b8adb4 1840px,#b3a8af 1920px,#ada3a9 2000px,#a79da4 2080px)"></div><div style="top:924px;background:linear-gradient(90deg,#b2acb1 0px,#b7afb5 80px,#bcb3b9 160px,#c1b7bd 240px,#c6bbc2 320px,#c8bdc4 400px,#c8bec4 480px,#c8bdc4 560px,#c6bdc3 640px,#c5bcc1 720px,#c4bbc0 800px,#c2babf 880px,#c1b9be 960px,#c0b8bd 1040px,#c0b8bd 1120px,#c0b7bd 1200px,#c0b7bd 1280px,#c0b7bd 1360px,#c0b7bd 1440px,#c0b6bd 1520px,#bfb5bc 1600px,#beb4ba 1680px,#bbb1b8 1760px,#b8adb4 1840px,#b3a8af 1920px,#ada3a9 2000px,#a79da4 2080px)"></div><div style="top:936px;background:linear-gradient(90deg,#b3acb1 0px,#b7afb5 80px,#bdb3b9 160px,#c2b8be 240px,#c6bcc2 320px,#c8bec4 400px,#c9bec5 480px,#c8bec4 560px,#c7bdc3 640px,#c5bcc2 720px,#c4bbc0 800px,#c3babf 880px,#c1b9be 960px,#c1b8bd 1040px,#c0b7bd 1120px,#c0b7bc 1200px,#c0b7bc 1280px,#c0b7bd 1360px,#c0b6bd 1440px,#c0b6bc 1520px,#bfb5bc 1600px,#beb3ba 1680px,#bbb1b7 1760px,#b8adb3 1840px,#b3a8ae 1920px,#ada2a9 2000px,#a89da4 2080px)"></div><div style="top:948px;background:linear-gradient(90deg,#b3acb1 0px,#b8afb5 80px,#bdb4b9 160px,#c3b8be 240px,#c7bcc2 320px,#c9bec5 400px,#c9bec5 480px,#c9bec4 560px,#c7bdc3 640px,#c6bcc2 720px,#c4bbc0 800px,#c3babf 880px,#c2b9be 960px,#c1b8bd 1040px,#c0b7bd 1120px,#c0b7bc 1200px,#c0b7bc 1280px,#c0b7bc 1360px,#c0b6bc 1440px,#c0b6bc 1520px,#bfb5bb 1600px,#beb3ba 1680px,#bbb0b7 1760px,#b8acb3 1840px,#b3a8ae 1920px,#ada2a9 2000px,#a89da3 2080px)"></div><div style="top:960px;background:linear-gradient(90deg,#b3acb1 0px,#b8afb5 80px,#beb4b9 160px,#c3b8bf 240px,#c8bcc3 320px,#cabec5 400px,#cabfc5 480px,#c9bec4 560px,#c8bdc3 640px,#c6bcc2 720px,#c5bbc0 800px,#c3babf 880px,#c2b9be 960px,#c1b8bd 1040px,#c1b7bc 1120px,#c0b7bc 1200px,#c0b7bc 1280px,#c0b6bc 1360px,#c1b6bc 1440px,#c0b6bc 1520px,#c0b5bb 1600px,#beb3b9 1680px,#bbb0b6 1760px,#b8acb3 1840px,#b3a7ae 1920px,#ada2a8 2000px,#a89da3 2080px)"></div><div style="top:972px;background:linear-gradient(90deg,#b4acb2 0px,#b8afb5 80px,#beb4ba 160px,#c4b9bf 240px,#c8bdc3 320px,#cabec5 400px,#cabfc5 480px,#cabec5 560px,#c8bdc3 640px,#c7bcc2 720px,#c5bbc0 800px,#c3babf 880px,#c2b9be 960px,#c1b8bd 1040px,#c1b7bc 1120px,#c1b7bc 1200px,#c1b6bc 1280px,#c1b6bc 1360px,#c1b6bc 1440px,#c0b5bc 1520px,#c0b4bb 1600px,#beb2b9 1680px,#bbb0b6 1760px,#b8acb2 1840px,#b3a7ad 1920px,#ada2a8 2000px,#a89da3 2080px)"></div><div style="top:984px;background:linear-gradient(90deg,#b4acb2 0px,#b9b0b5 80px,#bfb4ba 160px,#c5b9c0 240px,#c9bdc4 320px,#cbbfc6 400px,#cbbfc6 480px,#cabec5 560px,#c9bdc4 640px,#c7bcc2 720px,#c5bbc0 800px,#c4babf 880px,#c2b9be 960px,#c2b8bd 1040px,#c1b7bc 1120px,#c1b7bc 1200px,#c1b6bc 1280px,#c1b6bc 1360px,#c1b6bc 1440px,#c0b5bb 1520px,#c0b4ba 1600px,#beb2b9 1680px,#bbafb6 1760px,#b8acb2 1840px,#b3a7ad 1920px,#aea2a8 2000px,#a99da3 2080px)"></div><div style="top:996px;background:linear-gradient(90deg,#b4acb2 0px,#b9b0b5 80px,#bfb5ba 160px,#c5bac0 240px,#cabec4 320px,#cbbfc6 400px,#cbbfc6 480px,#cabfc5 560px,#c9bdc4 640px,#c7bcc2 720px,#c6bbc1 800px,#c4babf 880px,#c3b9be 960px,#c2b8bd 1040px,#c1b7bc 1120px,#c1b7bc 1200px,#c1b6bc 1280px,#c1b6bc 1360px,#c1b6bc 1440px,#c1b5bb 1520px,#c0b4ba 1600px,#beb2b8 1680px,#bbafb5 1760px,#b8abb2 1840px,#b3a6ad 1920px,#aea1a8 2000px,#a99da3 2080px)"></div><div style="top:1008px;background:linear-gradient(90deg,#b5acb2 0px,#b9b0b5 80px,#c0b5ba 160px,#c6bac0 240px,#cabec5 320px,#ccbfc6 400px,#ccbfc6 480px,#cbbfc5 560px,#cabec4 640px,#c8bcc2 720px,#c6bbc1 800px,#c4babf 880px,#c3b9be 960px,#c2b8bd 1040px,#c2b7bc 1120px,#c1b7bc 1200px,#c1b6bc 1280px,#c1b6bc 1360px,#c1b5bb 1440px,#c1b5bb 1520px,#c0b3ba 1600px,#beb2b8 1680px,#bbafb5 1760px,#b8abb1 1840px,#b3a6ac 1920px,#aea1a7 2000px,#a99ca3 2080px)"></div><div style="top:1020px;background:linear-gradient(90deg,#b5acb2 0px,#bab0b6 80px,#c0b5bb 160px,#c7bbc1 240px,#cbbec5 320px,#ccc0c6 400px,#ccc0c6 480px,#cbbfc5 560px,#cabec4 640px,#c8bcc2 720px,#c7bbc1 800px,#c5babf 880px,#c3b9be 960px,#c2b8bd 1040px,#c2b7bc 1120px,#c2b7bc 1200px,#c2b6bc 1280px,#c1b6bc 1360px,#c1b5bb 1440px,#c1b5bb 1520px,#c0b3b9 1600px,#beb1b7 1680px,#bbaeb5 1760px,#b8abb1 1840px,#b3a6ac 1920px,#aea1a7 2000px,#a99ca2 2080px)"></div><div style="top:1032px;background:linear-gradient(90deg,#b5adb2 0px,#bab0b6 80px,#c1b5bb 160px,#c7bbc1 240px,#ccbfc5 320px,#cdc0c7 400px,#cdc0c7 480px,#ccbfc6 560px,#cabec4 640px,#c9bcc2 720px,#c7bbc1 800px,#c5babf 880px,#c4b9be 960px,#c3b8bd 1040px,#c2b7bc 1120px,#c2b6bc 1200px,#c2b6bc 1280px,#c2b6bb 1360px,#c1b5bb 1440px,#c1b4ba 1520px,#c0b3b9 1600px,#beb1b7 1680px,#bbaeb4 1760px,#b8aab0 1840px,#b3a6ac 1920px,#aea1a7 2000px,#aa9ca2 2080px)"></div><div style="top:1044px;background:linear-gradient(90deg,#b6adb2 0px,#bab0b6 80px,#c1b5bb 160px,#c8bbc2 240px,#ccbfc6 320px,#cdc0c7 400px,#cdc0c7 480px,#ccbfc6 560px,#cbbec4 640px,#c9bdc3 720px,#c7bbc1 800px,#c6babf 880px,#c4b9be 960px,#c3b8bd 1040px,#c3b7bc 1120px,#c2b6bc 1200px,#c2b6bb 1280px,#c2b6bb 1360px,#c2b5bb 1440px,#c1b4ba 1520px,#c0b3b9 1600px,#beb1b7 1680px,#bbaeb4 1760px,#b8aab0 1840px,#b3a5ab 1920px,#aea1a7 2000px,#aa9ca2 2080px)"></div><div style="top:1056px;background:linear-gradient(90deg,#b6adb3 0px,#bbb0b6 80px,#c1b6bc 160px,#c8bbc2 240px,#ccbfc6 320px,#cec0c7 400px,#cec0c7 480px,#cdbfc6 560px,#cbbec4 640px,#c9bdc3 720px,#c8bbc1 800px,#c6babf 880px,#c4b9be 960px,#c3b8bd 1040px,#c3b7bc 1120px,#c2b6bc 1200px,#c2b6bb 1280px,#c2b5bb 1360px,#c2b5bb 1440px,#c1b4ba 1520px,#c0b2b9 1600px,#beb0b6 1680px,#bbadb4 1760px,#b8aab0 1840px,#b3a5ab 1920px,#aea0a6 2000px,#aa9ca2 2080px)"></div><div style="top:1068px;background:linear-gradient(90deg,#b7adb3 0px,#bbb1b6 80px,#c2b6bc 160px,#c9bcc2 240px,#cdbfc6 320px,#cec0c7 400px,#cec0c7 480px,#cdbfc6 560px,#ccbec4 640px,#cabdc3 720px,#c8bbc1 800px,#c6babf 880px,#c5b9be 960px,#c4b8bd 1040px,#c3b7bc 1120px,#c3b6bc 1200px,#c2b6bb 1280px,#c2b5bb 1360px,#c2b5ba 1440px,#c1b4ba 1520px,#c0b2b8 1600px,#beb0b6 1680px,#bbadb3 1760px,#b8a9af 1840px,#b3a5ab 1920px,#afa0a6 2000px,#aa9ca2 2080px)"></div><div style="top:1080px;background:linear-gradient(90deg,#b7adb3 0px,#bcb1b7 80px,#c2b6bc 160px,#c9bcc2 240px,#cdbfc6 320px,#cec0c7 400px,#cec0c7 480px,#cdc0c6 560px,#ccbec5 640px,#cabdc3 720px,#c8bbc1 800px,#c7babf 880px,#c5b9be 960px,#c4b8bd 1040px,#c3b7bc 1120px,#c3b6bc 1200px,#c3b6bb 1280px,#c2b5bb 1360px,#c2b4ba 1440px,#c1b3b9 1520px,#c0b2b8 1600px,#beb0b6 1680px,#bbadb3 1760px,#b8a9af 1840px,#b3a5ab 1920px,#afa0a6 2000px,#ab9ca2 2080px)"></div><div style="top:1092px;background:linear-gradient(90deg,#b7adb3 0px,#bcb1b7 80px,#c3b6bc 160px,#c9bcc2 240px,#cdbfc6 320px,#cfc1c7 400px,#cfc0c7 480px,#cec0c6 560px,#ccbec5 640px,#cbbdc3 720px,#c9bbc1 800px,#c7babf 880px,#c6b9be 960px,#c4b8bd 1040px,#c4b7bc 1120px,#c3b6bc 1200px,#c3b6bb 1280px,#c3b5bb 1360px,#c2b4ba 1440px,#c1b3b9 1520px,#c0b2b8 1600px,#beb0b6 1680px,#bbadb3 1760px,#b8a9af 1840px,#b3a5aa 1920px,#afa0a6 2000px,#ab9ca2 2080px)"></div><div style="top:1104px;background:linear-gradient(90deg,#b8aeb4 0px,#bdb1b7 80px,#c3b6bd 160px,#c9bcc2 240px,#cebfc6 320px,#cfc1c7 400px,#cfc1c7 480px,#cec0c6 560px,#cdbec5 640px,#cbbdc3 720px,#c9bcc1 800px,#c7bac0 880px,#c6b9be 960px,#c5b8bd 1040px,#c4b7bc 1120px,#c4b6bc 1200px,#c3b6bb 1280px,#c3b5bb 1360px,#c2b4ba 1440px,#c1b3b9 1520px,#c0b1b7 1600px,#beafb5 1680px,#bbacb2 1760px,#b8a9af 1840px,#b4a4aa 1920px,#afa0a6 2000px,#ab9ca2 2080px)"></div><div style="top:1116px;background:linear-gradient(90deg,#b8aeb4 0px,#bdb2b8 80px,#c3b7bd 160px,#cabcc2 240px,#cebfc6 320px,#cfc1c8 400px,#cfc1c7 480px,#cec0c6 560px,#cdbfc5 640px,#cbbdc3 720px,#cabcc1 800px,#c8bac0 880px,#c6b9be 960px,#c5b8bd 1040px,#c4b7bc 1120px,#c4b6bb 1200px,#c3b6bb 1280px,#c3b5ba 1360px,#c2b4ba 1440px,#c2b3b9 1520px,#c0b1b7 1600px,#beafb5 1680px,#bbacb2 1760px,#b8a8ae 1840px,#b4a4aa 1920px,#afa0a6 2000px,#ab9ca2 2080px)"></div><div style="top:1128px;background:linear-gradient(90deg,#b9aeb4 0px,#beb2b8 80px,#c4b7bd 160px,#cabcc3 240px,#cebfc6 320px,#d0c1c8 400px,#d0c1c7 480px,#cfc0c6 560px,#cdbfc5 640px,#ccbdc3 720px,#cabcc1 800px,#c8bac0 880px,#c7b9be 960px,#c6b8bd 1040px,#c5b7bc 1120px,#c4b6bb 1200px,#c4b5bb 1280px,#c3b5ba 1360px,#c3b4ba 1440px,#c2b3b8 1520px,#c0b1b7 1600px,#beafb5 1680px,#bcacb2 1760px,#b8a8ae 1840px,#b4a4aa 1920px,#b0a0a5 2000px,#ac9ca1 2080px)"></div><div style="top:1140px;background:linear-gradient(90deg,#b9aeb4 0px,#beb2b8 80px,#c4b7bd 160px,#cabcc3 240px,#cebfc6 320px,#d0c1c8 400px,#d0c1c7 480px,#cfc0c7 560px,#cebfc5 640px,#ccbdc3 720px,#cabcc2 800px,#c9bac0 880px,#c7b9be 960px,#c6b8bd 1040px,#c5b7bc 1120px,#c4b6bb 1200px,#c4b5bb 1280px,#c3b5ba 1360px,#c3b4b9 1440px,#c2b2b8 1520px,#c0b1b7 1600px,#beafb4 1680px,#bcacb1 1760px,#b8a8ae 1840px,#b4a4aa 1920px,#b0a0a5 2000px,#ac9ca1 2080px)"></div><div style="top:1152px;background:linear-gradient(90deg,#baafb5 0px,#bfb2b9 80px,#c5b7be 160px,#cabcc3 240px,#cebfc6 320px,#d0c1c8 400px,#d0c1c7 480px,#cfc0c7 560px,#cebfc5 640px,#ccbdc3 720px,#cbbcc2 800px,#c9bac0 880px,#c7b9be 960px,#c6b8bd 1040px,#c5b7bc 1120px,#c5b6bb 1200px,#c4b5bb 1280px,#c4b5ba 1360px,#c3b4b9 1440px,#c2b2b8 1520px,#c0b1b6 1600px,#beaeb4 1680px,#bcabb1 1760px,#b8a8ae 1840px,#b4a4a9 1920px,#b0a0a5 2000px,#ac9ca1 2080px)"></div><div style="top:1164px;background:linear-gradient(90deg,#bbafb5 0px,#bfb3b9 80px,#c5b7be 160px,#cbbcc3 240px,#cebfc6 320px,#d0c1c7 400px,#d0c1c7 480px,#d0c0c7 560px,#cebfc5 640px,#cdbdc3 720px,#cbbcc2 800px,#c9bac0 880px,#c8b9be 960px,#c7b8bd 1040px,#c6b7bc 1120px,#c5b6bb 1200px,#c4b5bb 1280px,#c4b4ba 1360px,#c3b3b9 1440px,#c2b2b8 1520px,#c1b0b6 1600px,#beaeb4 1680px,#bcabb1 1760px,#b8a8ad 1840px,#b4a4a9 1920px,#b09fa5 2000px,#ac9ca1 2080px)"></div></div>
<svg id="flower" width="1920" height="1080" viewBox="0 0 1920 1080"><defs>
<filter id="b1" filterUnits="userSpaceOnUse" x="0" y="0" width="1920" height="1080"><feGaussianBlur stdDeviation="1"/></filter>
<filter id="b2" filterUnits="userSpaceOnUse" x="0" y="0" width="1920" height="1080"><feGaussianBlur stdDeviation="2.2"/></filter>
<filter id="b4" filterUnits="userSpaceOnUse" x="0" y="0" width="1920" height="1080"><feGaussianBlur stdDeviation="4.5"/></filter>
<filter id="b8" filterUnits="userSpaceOnUse" x="0" y="0" width="1920" height="1080"><feGaussianBlur stdDeviation="8"/></filter>
<linearGradient id="outerP" x1="0" y1="0" x2="0" y2="1">
  <stop offset="0" stop-color="#cfb9ba"/><stop offset="1" stop-color="#c8aaaa"/>
</linearGradient>

<linearGradient id="stripG" gradientUnits="userSpaceOnUse" x1="220" y1="0" x2="1620" y2="0">
<stop offset="0.0014" stop-color="#a58482"/>
<stop offset="0.0571" stop-color="#ad8a88"/>
<stop offset="0.0857" stop-color="#b18d8a"/>
<stop offset="0.1286" stop-color="#bfa19f"/>
<stop offset="0.1786" stop-color="#bc9c99"/>
<stop offset="0.2143" stop-color="#b78b87"/>
<stop offset="0.2643" stop-color="#ba8d89"/>
<stop offset="0.2857" stop-color="#c2a4a2"/>
<stop offset="0.3071" stop-color="#b8928f"/>
<stop offset="0.3429" stop-color="#ae8c8a"/>
<stop offset="0.3714" stop-color="#bd9e9c"/>
<stop offset="0.4000" stop-color="#c3a8a6"/>
<stop offset="0.4500" stop-color="#b3928f"/>
<stop offset="0.5143" stop-color="#8a6664"/>
<stop offset="0.5571" stop-color="#b39290"/>
<stop offset="0.6000" stop-color="#8f6c6a"/>
<stop offset="0.6429" stop-color="#bf9b98"/>
<stop offset="0.6857" stop-color="#c7a7a5"/>
<stop offset="0.7214" stop-color="#b69391"/>
<stop offset="0.7643" stop-color="#bf9b98"/>
<stop offset="0.8429" stop-color="#c6a3a0"/>
<stop offset="0.9143" stop-color="#c9a7a5"/>
<stop offset="1.0000" stop-color="#cbaead"/>
</linearGradient>
<linearGradient id="vshade" x1="0" y1="0" x2="0" y2="1">
<stop offset="0" stop-color="#808080" stop-opacity="0.12"/><stop offset="0.3" stop-color="#808080" stop-opacity="0.03"/><stop offset="1" stop-color="#201818" stop-opacity="0"/>
</linearGradient>
</defs>
<path d="M525 160 Q606 131 690 160 Z" fill="#b59a9a" filter="url(#b1)"/>
<path d="M532 157 Q606 136 681 157" fill="none" stroke="#cbb6b6" stroke-width="1.5" filter="url(#b1)"/>
<path d="M1480 425 C1518 462 1532 535 1530 585 C1528 640 1515 690 1480 720 Z" fill="#c4aeb0" filter="url(#b1)"/>
<path d="M1400.0 760.0 C1422.8 756.3 1501.0 737.0 1537.0 738.0 C1573.0 739.0 1592.3 753.5 1616.0 766.0 C1639.7 778.5 1661.2 794.7 1679.0 813.0 C1696.8 831.3 1712.0 852.8 1723.0 876.0 C1734.0 899.2 1741.8 931.0 1745.0 952.0 C1748.2 973.0 1744.7 987.3 1742.0 1002.0 C1739.3 1016.7 1731.2 1033.7 1729.0 1040.0 L1400 1040 Z" fill="url(#outerP)"/>
<path d="M1537.0 738.0 C1550.2 742.7 1592.3 753.5 1616.0 766.0 C1639.7 778.5 1661.2 794.7 1679.0 813.0 C1696.8 831.3 1712.0 852.8 1723.0 876.0 C1734.0 899.2 1741.8 931.0 1745.0 952.0 C1748.2 973.0 1744.7 987.3 1742.0 1002.0 C1739.3 1016.7 1731.2 1033.7 1729.0 1040.0" fill="none" stroke="#dccbcb" stroke-width="2.2" filter="url(#b1)"/>
<clipPath id="stripClip"><path d="M253 880 L1420 880  C1433.3 881.5 1477.8 882.8 1500.0 889.0 C1522.2 895.2 1537.8 905.5 1553.0 917.0 C1568.2 928.5 1581.5 944.3 1591.0 958.0 C1600.5 971.7 1606.0 985.3 1610.0 999.0 C1614.0 1012.7 1614.2 1033.2 1615.0 1040.0 L221 1040 Z"/></clipPath>
<path d="M253 880 L1420 880  C1433.3 881.5 1477.8 882.8 1500.0 889.0 C1522.2 895.2 1537.8 905.5 1553.0 917.0 C1568.2 928.5 1581.5 944.3 1591.0 958.0 C1600.5 971.7 1606.0 985.3 1610.0 999.0 C1614.0 1012.7 1614.2 1033.2 1615.0 1040.0 L221 1040 Z" fill="url(#stripG)"/>
<g clip-path="url(#stripClip)">
<path d="M253 880 L256 907 C259 950 266 1000 279 1040 L221 1040 Z" fill="#bca9aa"/>
<path d="M345.0 890.0 C346.3 892.8 343.3 895.3 353.0 907.0 C362.7 918.7 385.3 937.8 403.0 960.0 C420.7 982.2 449.7 1026.7 459.0 1040.0" fill="none" stroke="#7a5554" stroke-width="10" opacity="0.30" filter="url(#b4)" transform="translate(-10 0)"/>
<path d="M594.0 890.0 C594.0 892.8 594.3 895.3 594.0 907.0 C593.7 918.7 590.5 937.8 592.0 960.0 C593.5 982.2 601.2 1026.7 603.0 1040.0" fill="none" stroke="#6e4a49" stroke-width="10" opacity="0.20" filter="url(#b4)" transform="translate(-10 0)"/>
<path d="M688.0 890.0 C686.8 892.8 684.7 895.3 681.0 907.0 C677.3 918.7 669.2 937.8 666.0 960.0 C662.8 982.2 662.7 1026.7 662.0 1040.0" fill="none" stroke="#6e4a49" stroke-width="12" opacity="0.25" filter="url(#b4)" transform="translate(-10 0)"/>
<path d="M594.0 890.0 C594.0 892.8 594.3 895.3 594.0 907.0 C593.7 918.7 590.5 937.8 592.0 960.0 C593.5 982.2 601.2 1026.7 603.0 1040.0" fill="none" stroke="#d0b8b6" stroke-width="16" opacity="0.55" filter="url(#b4)" transform="translate(10 0)"/>
<path d="M688.0 890.0 C686.8 892.8 684.7 895.3 681.0 907.0 C677.3 918.7 669.2 937.8 666.0 960.0 C662.8 982.2 662.7 1026.7 662.0 1040.0" fill="none" stroke="#d0b8b6" stroke-width="16" opacity="0.50" filter="url(#b4)" transform="translate(10 0)"/>
<path d="M256.0 890.0 C256.5 898.3 257.3 921.7 259.0 940.0 C260.7 958.3 262.7 983.3 266.0 1000.0 C269.3 1016.7 276.8 1033.3 279.0 1040.0" fill="none" stroke="#cdbebe" stroke-width="4.0" filter="url(#b2)"/>
<path d="M345.0 890.0 C346.3 892.8 343.3 895.3 353.0 907.0 C362.7 918.7 385.3 937.8 403.0 960.0 C420.7 982.2 449.7 1026.7 459.0 1040.0" fill="none" stroke="#cdb6b5" stroke-width="8.0" filter="url(#b2)"/>
<path d="M385.0 890.0 C386.5 892.8 385.3 895.3 394.0 907.0 C402.7 918.7 421.5 937.8 437.0 960.0 C452.5 982.2 478.7 1026.7 487.0 1040.0" fill="none" stroke="#d2bfbe" stroke-width="4.0" filter="url(#b2)"/>
<path d="M440.0 890.0 C441.7 892.8 445.0 895.3 450.0 907.0 C455.0 918.7 463.0 937.8 470.0 960.0 C477.0 982.2 488.3 1026.7 492.0 1040.0" fill="none" stroke="#d2bfbe" stroke-width="4.0" filter="url(#b2)"/>
<path d="M594.0 890.0 C594.0 892.8 594.3 895.3 594.0 907.0 C593.7 918.7 590.5 937.8 592.0 960.0 C593.5 982.2 601.2 1026.7 603.0 1040.0" fill="none" stroke="#d8c6c6" stroke-width="5.0" filter="url(#b2)"/>
<path d="M688.0 890.0 C686.8 892.8 684.7 895.3 681.0 907.0 C677.3 918.7 669.2 937.8 666.0 960.0 C662.8 982.2 662.7 1026.7 662.0 1040.0" fill="none" stroke="#d8c6c6" stroke-width="5.0" filter="url(#b2)"/>
<radialGradient id="dkD" gradientUnits="userSpaceOnUse" cx="948" cy="1025" r="70"><stop offset="0" stop-color="#2e1c1c"/><stop offset="0.45" stop-color="#5e3e3d"/><stop offset="1" stop-color="#a88583"/></radialGradient>
<linearGradient id="dkE" gradientUnits="userSpaceOnUse" x1="975" y1="0" x2="1060" y2="0"><stop offset="0" stop-color="#b99593"/><stop offset="0.6" stop-color="#8e6866"/><stop offset="1" stop-color="#6a4846"/></linearGradient>
<path d="M800 880 L1180 880 L1180 1045 L716 1045  C716.7 1042.7 716.7 1043.5 720.0 1031.0 C723.3 1018.5 726.5 990.2 736.0 970.0 C745.5 949.8 766.3 925.0 777.0 910.0 C787.7 895.0 796.2 885.0 800.0 880.0 Z" fill="#c6a6a3"/>
<path d="M716.0 1045.0 C716.7 1042.7 716.7 1043.5 720.0 1031.0 C723.3 1018.5 726.5 990.2 736.0 970.0 C745.5 949.8 768.0 922.5 777.0 910.0 C786.0 897.5 787.8 897.5 790.0 895.0" fill="none" stroke="#3e2524" stroke-width="7" opacity="0.32" filter="url(#b4)" transform="translate(-7 -5)"/>
<path d="M716.0 1045.0 C716.7 1042.7 716.7 1043.5 720.0 1031.0 C723.3 1018.5 726.5 990.2 736.0 970.0 C745.5 949.8 768.0 922.5 777.0 910.0 C786.0 897.5 787.8 897.5 790.0 895.0" fill="none" stroke="#d6bfbc" stroke-width="12" opacity="0.55" filter="url(#b4)" transform="translate(7 5)"/>
<path d="M716.0 1045.0 C716.7 1042.7 716.7 1043.5 720.0 1031.0 C723.3 1018.5 726.5 990.2 736.0 970.0 C745.5 949.8 768.0 922.5 777.0 910.0 C786.0 897.5 787.8 897.5 790.0 895.0" fill="none" stroke="#dccac8" stroke-width="4.5" filter="url(#b2)"/>
<path d="M756.0 1045.0 C756.2 1042.7 755.7 1043.2 757.0 1031.0 C758.3 1018.8 759.7 989.8 764.0 972.0 C768.3 954.2 775.8 934.5 783.0 924.0 C790.2 913.5 800.0 913.0 807.0 909.0 C814.0 905.0 822.0 901.5 825.0 900.0" fill="none" stroke="#3e2524" stroke-width="7" opacity="0.32" filter="url(#b4)" transform="translate(-7 -5)"/>
<path d="M756.0 1045.0 C756.2 1042.7 755.7 1043.2 757.0 1031.0 C758.3 1018.8 759.7 989.8 764.0 972.0 C768.3 954.2 775.8 934.5 783.0 924.0 C790.2 913.5 800.0 913.0 807.0 909.0 C814.0 905.0 822.0 901.5 825.0 900.0" fill="none" stroke="#d6bfbc" stroke-width="12" opacity="0.55" filter="url(#b4)" transform="translate(7 5)"/>
<path d="M756.0 1045.0 C756.2 1042.7 755.7 1043.2 757.0 1031.0 C758.3 1018.8 759.7 989.8 764.0 972.0 C768.3 954.2 775.8 934.5 783.0 924.0 C790.2 913.5 800.0 913.0 807.0 909.0 C814.0 905.0 822.0 901.5 825.0 900.0" fill="none" stroke="#dccac8" stroke-width="4.5" filter="url(#b2)"/>
<path d="M769.0 1045.0 C769.3 1042.7 767.8 1041.2 771.0 1031.0 C774.2 1020.8 780.0 998.7 788.0 984.0 C796.0 969.3 807.0 953.8 819.0 943.0 C831.0 932.2 841.2 924.5 860.0 919.0 C878.8 913.5 908.7 912.2 932.0 910.0 C955.3 907.8 972.0 907.7 1000.0 906.0 C1028.0 904.3 1083.3 901.0 1100.0 900.0" fill="none" stroke="#3e2524" stroke-width="7" opacity="0.32" filter="url(#b4)" transform="translate(-7 -5)"/>
<path d="M769.0 1045.0 C769.3 1042.7 767.8 1041.2 771.0 1031.0 C774.2 1020.8 780.0 998.7 788.0 984.0 C796.0 969.3 807.0 953.8 819.0 943.0 C831.0 932.2 841.2 924.5 860.0 919.0 C878.8 913.5 908.7 912.2 932.0 910.0 C955.3 907.8 972.0 907.7 1000.0 906.0 C1028.0 904.3 1083.3 901.0 1100.0 900.0" fill="none" stroke="#d6bfbc" stroke-width="12" opacity="0.55" filter="url(#b4)" transform="translate(7 5)"/>
<path d="M769.0 1045.0 C769.3 1042.7 767.8 1041.2 771.0 1031.0 C774.2 1020.8 780.0 998.7 788.0 984.0 C796.0 969.3 807.0 953.8 819.0 943.0 C831.0 932.2 841.2 924.5 860.0 919.0 C878.8 913.5 908.7 912.2 932.0 910.0 C955.3 907.8 972.0 907.7 1000.0 906.0 C1028.0 904.3 1083.3 901.0 1100.0 900.0" fill="none" stroke="#dccac8" stroke-width="4.5" filter="url(#b2)"/>
<path d="M800.0 1045.0 C800.3 1042.7 798.8 1040.0 802.0 1031.0 C805.2 1022.0 811.3 1003.7 819.0 991.0 C826.7 978.3 835.2 965.0 848.0 955.0 C860.8 945.0 876.0 936.5 896.0 931.0 C916.0 925.5 946.2 925.2 968.0 922.0 C989.8 918.8 1012.3 914.5 1027.0 912.0 C1041.7 909.5 1043.8 909.3 1056.0 907.0 C1068.2 904.7 1092.7 899.5 1100.0 898.0" fill="none" stroke="#3e2524" stroke-width="7" opacity="0.32" filter="url(#b4)" transform="translate(-7 -5)"/>
<path d="M800.0 1045.0 C800.3 1042.7 798.8 1040.0 802.0 1031.0 C805.2 1022.0 811.3 1003.7 819.0 991.0 C826.7 978.3 835.2 965.0 848.0 955.0 C860.8 945.0 876.0 936.5 896.0 931.0 C916.0 925.5 946.2 925.2 968.0 922.0 C989.8 918.8 1012.3 914.5 1027.0 912.0 C1041.7 909.5 1043.8 909.3 1056.0 907.0 C1068.2 904.7 1092.7 899.5 1100.0 898.0" fill="none" stroke="#d6bfbc" stroke-width="12" opacity="0.55" filter="url(#b4)" transform="translate(7 5)"/>
<path d="M800.0 1045.0 C800.3 1042.7 798.8 1040.0 802.0 1031.0 C805.2 1022.0 811.3 1003.7 819.0 991.0 C826.7 978.3 835.2 965.0 848.0 955.0 C860.8 945.0 876.0 936.5 896.0 931.0 C916.0 925.5 946.2 925.2 968.0 922.0 C989.8 918.8 1012.3 914.5 1027.0 912.0 C1041.7 909.5 1043.8 909.3 1056.0 907.0 C1068.2 904.7 1092.7 899.5 1100.0 898.0" fill="none" stroke="#dccac8" stroke-width="4.5" filter="url(#b2)"/>
<path d="M819.0 1045.0 C819.3 1042.7 817.3 1040.0 821.0 1031.0 C824.7 1022.0 832.2 1002.8 841.0 991.0 C849.8 979.2 858.8 968.3 874.0 960.0 C889.2 951.7 910.3 945.8 932.0 941.0 C953.7 936.2 984.2 935.5 1004.0 931.0 C1023.8 926.5 1039.2 918.0 1051.0 914.0 C1062.8 910.0 1066.8 909.7 1075.0 907.0 C1083.2 904.3 1095.8 899.5 1100.0 898.0" fill="none" stroke="#3e2524" stroke-width="7" opacity="0.32" filter="url(#b4)" transform="translate(-7 -5)"/>
<path d="M819.0 1045.0 C819.3 1042.7 817.3 1040.0 821.0 1031.0 C824.7 1022.0 832.2 1002.8 841.0 991.0 C849.8 979.2 858.8 968.3 874.0 960.0 C889.2 951.7 910.3 945.8 932.0 941.0 C953.7 936.2 984.2 935.5 1004.0 931.0 C1023.8 926.5 1039.2 918.0 1051.0 914.0 C1062.8 910.0 1066.8 909.7 1075.0 907.0 C1083.2 904.3 1095.8 899.5 1100.0 898.0" fill="none" stroke="#d6bfbc" stroke-width="12" opacity="0.55" filter="url(#b4)" transform="translate(7 5)"/>
<path d="M819.0 1045.0 C819.3 1042.7 817.3 1040.0 821.0 1031.0 C824.7 1022.0 832.2 1002.8 841.0 991.0 C849.8 979.2 858.8 968.3 874.0 960.0 C889.2 951.7 910.3 945.8 932.0 941.0 C953.7 936.2 984.2 935.5 1004.0 931.0 C1023.8 926.5 1039.2 918.0 1051.0 914.0 C1062.8 910.0 1066.8 909.7 1075.0 907.0 C1083.2 904.3 1095.8 899.5 1100.0 898.0" fill="none" stroke="#dccac8" stroke-width="4.5" filter="url(#b2)"/>
<path d="M853.0 1045.0 C853.3 1042.7 851.5 1040.0 855.0 1031.0 C858.5 1022.0 865.2 1002.0 874.0 991.0 C882.8 980.0 894.3 971.3 908.0 965.0 C921.7 958.7 938.0 956.3 956.0 953.0 C974.0 949.7 998.2 949.5 1016.0 945.0 C1033.8 940.5 1047.2 931.8 1063.0 926.0 C1078.8 920.2 1099.8 914.3 1111.0 910.0 C1122.2 905.7 1126.8 901.7 1130.0 900.0" fill="none" stroke="#3e2524" stroke-width="7" opacity="0.32" filter="url(#b4)" transform="translate(-7 -5)"/>
<path d="M853.0 1045.0 C853.3 1042.7 851.5 1040.0 855.0 1031.0 C858.5 1022.0 865.2 1002.0 874.0 991.0 C882.8 980.0 894.3 971.3 908.0 965.0 C921.7 958.7 938.0 956.3 956.0 953.0 C974.0 949.7 998.2 949.5 1016.0 945.0 C1033.8 940.5 1047.2 931.8 1063.0 926.0 C1078.8 920.2 1099.8 914.3 1111.0 910.0 C1122.2 905.7 1126.8 901.7 1130.0 900.0" fill="none" stroke="#d6bfbc" stroke-width="12" opacity="0.55" filter="url(#b4)" transform="translate(7 5)"/>
<path d="M853.0 1045.0 C853.3 1042.7 851.5 1040.0 855.0 1031.0 C858.5 1022.0 865.2 1002.0 874.0 991.0 C882.8 980.0 894.3 971.3 908.0 965.0 C921.7 958.7 938.0 956.3 956.0 953.0 C974.0 949.7 998.2 949.5 1016.0 945.0 C1033.8 940.5 1047.2 931.8 1063.0 926.0 C1078.8 920.2 1099.8 914.3 1111.0 910.0 C1122.2 905.7 1126.8 901.7 1130.0 900.0" fill="none" stroke="#dccac8" stroke-width="4.5" filter="url(#b2)"/>
<path d="M917.0 1045.0 C917.2 1040.8 918.8 1028.3 918.0 1020.0 C917.2 1011.7 912.5 1002.5 912.0 995.0 C911.5 987.5 912.5 980.2 915.0 975.0 C917.5 969.8 919.5 966.8 927.0 964.0 C934.5 961.2 946.2 959.5 960.0 958.0 C973.8 956.5 995.0 956.0 1010.0 955.0 C1025.0 954.0 1043.7 951.2 1050.0 952.0 C1056.3 952.8 1054.7 958.3 1048.0 960.0 C1041.3 961.7 1020.5 961.0 1010.0 962.0 C999.5 963.0 991.3 963.0 985.0 966.0 C978.7 969.0 975.8 973.5 972.0 980.0 C968.2 986.5 965.2 997.3 962.0 1005.0 C958.8 1012.7 955.8 1019.3 953.0 1026.0 C950.2 1032.7 946.3 1041.8 945.0 1045.0 Z" fill="url(#dkD)" filter="url(#b1)"/>
<path d="M955.0 1045.0 C956.2 1038.3 959.2 1015.8 962.0 1005.0 C964.8 994.2 968.2 986.5 972.0 980.0 C975.8 973.5 978.7 969.0 985.0 966.0 C991.3 963.0 997.5 963.3 1010.0 962.0 C1022.5 960.7 1051.7 958.7 1060.0 958.0 L1110 955 L1110 1045 Z" fill="url(#dkE)"/>
<path d="M896.0 1045.0 C896.7 1040.8 900.0 1028.3 900.0 1020.0 C900.0 1011.7 895.5 1003.0 896.0 995.0 C896.5 987.0 899.0 977.5 903.0 972.0 C907.0 966.5 910.5 964.5 920.0 962.0 C929.5 959.5 945.0 958.5 960.0 957.0 C975.0 955.5 993.3 954.5 1010.0 953.0 C1026.7 951.5 1045.0 949.5 1060.0 948.0 C1075.0 946.5 1093.3 944.7 1100.0 944.0" fill="none" stroke="#3e2524" stroke-width="8" opacity="0.50" filter="url(#b4)" transform="translate(-7 -2)"/>
<path d="M945.0 1045.0 C946.3 1041.8 950.2 1032.7 953.0 1026.0 C955.8 1019.3 958.8 1012.7 962.0 1005.0 C965.2 997.3 968.2 986.5 972.0 980.0 C975.8 973.5 978.7 969.0 985.0 966.0 C991.3 963.0 995.0 963.3 1010.0 962.0 C1025.0 960.7 1060.0 959.2 1075.0 958.0 C1090.0 956.8 1095.8 955.5 1100.0 955.0" fill="none" stroke="#3e2524" stroke-width="6" opacity="0.30" filter="url(#b4)" transform="translate(-4 0)"/>
<path d="M896.0 1045.0 C896.7 1040.8 900.0 1028.3 900.0 1020.0 C900.0 1011.7 895.5 1003.0 896.0 995.0 C896.5 987.0 899.0 977.5 903.0 972.0 C907.0 966.5 910.5 964.5 920.0 962.0 C929.5 959.5 945.0 958.5 960.0 957.0 C975.0 955.5 993.3 954.5 1010.0 953.0 C1026.7 951.5 1045.0 949.5 1060.0 948.0 C1075.0 946.5 1093.3 944.7 1100.0 944.0" fill="none" stroke="#d6bfbc" stroke-width="12" opacity="0.50" filter="url(#b4)" transform="translate(-10 3)"/>
<path d="M896.0 1045.0 C896.7 1040.8 900.0 1028.3 900.0 1020.0 C900.0 1011.7 895.5 1003.0 896.0 995.0 C896.5 987.0 899.0 977.5 903.0 972.0 C907.0 966.5 910.5 964.5 920.0 962.0 C929.5 959.5 945.0 958.5 960.0 957.0 C975.0 955.5 993.3 954.5 1010.0 953.0 C1026.7 951.5 1045.0 949.5 1060.0 948.0 C1075.0 946.5 1093.3 944.7 1100.0 944.0" fill="none" stroke="#dccac8" stroke-width="5.0" filter="url(#b2)"/>
<path d="M945.0 1045.0 C946.3 1041.8 950.2 1032.7 953.0 1026.0 C955.8 1019.3 958.8 1012.7 962.0 1005.0 C965.2 997.3 968.2 986.5 972.0 980.0 C975.8 973.5 978.7 969.0 985.0 966.0 C991.3 963.0 995.0 963.3 1010.0 962.0 C1025.0 960.7 1060.0 959.2 1075.0 958.0 C1090.0 956.8 1095.8 955.5 1100.0 955.0" fill="none" stroke="#dccac8" stroke-width="5.0" filter="url(#b2)"/>
<path d="M1035.0 1045.0 C1036.5 1037.5 1039.8 1009.3 1044.0 1000.0 C1048.2 990.7 1052.3 992.3 1060.0 989.0 C1067.7 985.7 1085.0 981.5 1090.0 980.0" fill="none" stroke="#3e2524" stroke-width="12" opacity="0.35" filter="url(#b4)" transform="translate(-9 -3)"/>
<path d="M1035.0 1045.0 C1036.5 1037.5 1039.8 1009.3 1044.0 1000.0 C1048.2 990.7 1052.3 992.3 1060.0 989.0 C1067.7 985.7 1085.0 981.5 1090.0 980.0" fill="none" stroke="#dac7c6" stroke-width="5.0" filter="url(#b2)"/>
<path d="M1033.0 1045.0 C1036.0 1036.0 1040.0 1006.0 1051.0 991.0 C1062.0 976.0 1080.5 966.5 1099.0 955.0 C1117.5 943.5 1151.5 927.5 1162.0 922.0" fill="none" stroke="#5a3a38" stroke-width="16" opacity="0.55" filter="url(#b8)" transform="translate(-10 -6)"/>
<path d="M1033.0 1045.0 C1036.0 1036.0 1040.0 1006.0 1051.0 991.0 C1062.0 976.0 1080.5 966.5 1099.0 955.0 C1117.5 943.5 1149.2 925.3 1162.0 922.0 C1174.8 918.7 1173.0 925.3 1176.0 935.0 C1179.0 944.7 1178.7 961.7 1180.0 980.0 C1181.3 998.3 1183.3 1034.2 1184.0 1045.0 Z" fill="#c29f9c"/>
<path d="M1033.0 1045.0 C1036.0 1036.0 1040.0 1006.0 1051.0 991.0 C1062.0 976.0 1080.5 966.5 1099.0 955.0 C1117.5 943.5 1149.2 925.3 1162.0 922.0 C1174.8 918.7 1173.0 925.3 1176.0 935.0 C1179.0 944.7 1178.7 961.7 1180.0 980.0 C1181.3 998.3 1183.3 1034.2 1184.0 1045.0" fill="none" stroke="#dccac9" stroke-width="4" filter="url(#b1)"/>
<path d="M1209.0 890.0 C1208.7 892.8 1209.2 893.7 1207.0 907.0 C1204.8 920.3 1196.7 947.8 1196.0 970.0 C1195.3 992.2 1201.8 1028.3 1203.0 1040.0" fill="none" stroke="#6e4a49" stroke-width="10" opacity="0.30" filter="url(#b4)" transform="translate(10 0)"/>
<path d="M1238.0 890.0 C1237.5 892.8 1237.8 893.7 1235.0 907.0 C1232.2 920.3 1222.2 947.8 1221.0 970.0 C1219.8 992.2 1226.8 1028.3 1228.0 1040.0" fill="none" stroke="#6e4a49" stroke-width="10" opacity="0.30" filter="url(#b4)" transform="translate(10 0)"/>
<path d="M1272.0 890.0 C1271.3 892.8 1271.3 893.7 1268.0 907.0 C1264.7 920.3 1252.2 947.8 1252.0 970.0 C1251.8 992.2 1264.5 1028.3 1267.0 1040.0" fill="none" stroke="#6e4a49" stroke-width="8" opacity="0.30" filter="url(#b4)" transform="translate(8 0)"/>
<path d="M1209.0 890.0 C1208.7 892.8 1209.2 893.7 1207.0 907.0 C1204.8 920.3 1196.7 947.8 1196.0 970.0 C1195.3 992.2 1201.8 1028.3 1203.0 1040.0" fill="none" stroke="#d8c6c5" stroke-width="4.0" filter="url(#b1)"/>
<path d="M1238.0 890.0 C1237.5 892.8 1237.8 893.7 1235.0 907.0 C1232.2 920.3 1222.2 947.8 1221.0 970.0 C1219.8 992.2 1226.8 1028.3 1228.0 1040.0" fill="none" stroke="#d8c6c5" stroke-width="4.0" filter="url(#b1)"/>
<path d="M1272.0 890.0 C1271.3 892.8 1271.3 893.7 1268.0 907.0 C1264.7 920.3 1252.2 947.8 1252.0 970.0 C1251.8 992.2 1264.5 1028.3 1267.0 1040.0" fill="none" stroke="#d8c6c5" stroke-width="4.0" filter="url(#b1)"/>
<path d="M1350.0 900.0 C1347.8 901.7 1347.0 900.0 1337.0 910.0 C1327.0 920.0 1299.7 938.3 1290.0 960.0 C1280.3 981.7 1280.8 1026.7 1279.0 1040.0" fill="none" stroke="#d8c6c5" stroke-width="4.0" filter="url(#b1)"/>
<linearGradient id="arcSh" gradientUnits="userSpaceOnUse" x1="1300" y1="905" x2="1470" y2="1010"><stop offset="0" stop-color="#4a2e2e" stop-opacity="0.3"/><stop offset="1" stop-color="#4a2e2e" stop-opacity="0"/></linearGradient>
<path d="M1360.0 880.0 C1356.2 885.0 1348.7 896.7 1337.0 910.0 C1325.3 923.3 1299.7 937.5 1290.0 960.0 C1280.3 982.5 1280.8 1030.8 1279.0 1045.0 L1520 1045 L1520 880 Z" fill="url(#arcSh)" filter="url(#b1)"/>
<path d="M1360.0 880.0 C1356.2 885.0 1348.7 896.7 1337.0 910.0 C1325.3 923.3 1299.7 938.3 1290.0 960.0 C1280.3 981.7 1280.8 1026.7 1279.0 1040.0" fill="none" stroke="#5a3a3a" stroke-width="46" opacity="0.32" filter="url(#b8)" transform="translate(30 0)"/>
<path d="M1293.0 1040.0 C1295.0 1033.7 1298.8 1011.7 1305.0 1002.0 C1311.2 992.3 1319.7 986.8 1330.0 982.0 C1340.3 977.2 1350.5 972.5 1367.0 973.0 C1383.5 973.5 1410.8 978.8 1429.0 985.0 C1447.2 991.2 1464.7 1000.8 1476.0 1010.0 C1487.3 1019.2 1493.5 1035.0 1497.0 1040.0" fill="none" stroke="#5a3a3a" stroke-width="14" opacity="0.25" filter="url(#b4)" transform="translate(-4 -8)"/>
<path d="M1293.0 1040.0 C1295.0 1033.7 1298.8 1011.7 1305.0 1002.0 C1311.2 992.3 1319.7 986.8 1330.0 982.0 C1340.3 977.2 1350.5 972.5 1367.0 973.0 C1383.5 973.5 1410.8 978.8 1429.0 985.0 C1447.2 991.2 1464.7 1000.8 1476.0 1010.0 C1487.3 1019.2 1493.5 1035.0 1497.0 1040.0 Z" fill="#c9aaa7"/>
<path d="M1293.0 1040.0 C1295.0 1033.7 1298.8 1011.7 1305.0 1002.0 C1311.2 992.3 1319.7 986.8 1330.0 982.0 C1340.3 977.2 1350.5 972.5 1367.0 973.0 C1383.5 973.5 1410.8 978.8 1429.0 985.0 C1447.2 991.2 1464.7 1000.8 1476.0 1010.0 C1487.3 1019.2 1493.5 1035.0 1497.0 1040.0" fill="none" stroke="#dccaca" stroke-width="2.5" filter="url(#b1)"/>
<rect x="220" y="880" width="1400" height="160" fill="url(#vshade)"/>
</g>
<path d="M1500.0 889.0 C1508.8 893.7 1537.8 905.5 1553.0 917.0 C1568.2 928.5 1581.5 944.3 1591.0 958.0 C1600.5 971.7 1606.0 985.3 1610.0 999.0 C1614.0 1012.7 1614.2 1033.2 1615.0 1040.0" fill="none" stroke="#dccaca" stroke-width="2.2" filter="url(#b1)"/></svg>
<!-- Recycle bin -->
<svg class="abs" style="left:18px;top:8px" width="40" height="46" viewBox="0 0 40 46">
  <defs>
    <linearGradient id="binG" x1="0" y1="0" x2="1" y2="0"><stop offset="0" stop-color="#e9ecef"/><stop offset="0.5" stop-color="#dde2e6"/><stop offset="1" stop-color="#c9cfd4"/></linearGradient>
  </defs>
  <path d="M2 5 L38 5 L34 43 L6.5 43 Z" fill="url(#binG)" opacity="0.95"/>
  <path d="M2.5 2.5 L37.5 2.5 L38 7 L2 7 Z" fill="#f2f4f6"/>
  <path d="M3 4 L37 4 L36 6.5 L4 6.5 Z" fill="#bfc7cd"/>
  <rect x="7" y="40" width="27" height="3" fill="#aeb4ba"/>
  <g transform="translate(20 24)">
    <g id="rarr">
      <path d="M-5.5 -6.5 L-2.5 -10 L3 -10 L6.5 -4.2" fill="none" stroke="#0b90e6" stroke-width="3.6" stroke-linejoin="round"/>
      <path d="M3.5 -3.2 L10 -6 L9.2 1.5 Z" fill="#0b90e6"/>
      <path d="M-6.8 -5.5 L-3.8 -10.5 L-1 -9 L-4 -4 Z" fill="#0568c8"/>
    </g>
    <use href="#rarr" transform="rotate(120)"/>
    <use href="#rarr" transform="rotate(240)"/>
  </g>
</svg>
<div class="dlabel" style="left:0;top:58px;width:76px;">Recycle Bin</div>
<!-- Edge -->
<svg class="abs" style="left:14px;top:107px" width="48" height="48" viewBox="0 0 48 48">
  <defs>
    <linearGradient id="edG" x1="0" y1="0" x2="1" y2="0.6"><stop offset="0" stop-color="#36c0f0"/><stop offset="0.5" stop-color="#2ec4c8"/><stop offset="1" stop-color="#6ae05a"/></linearGradient>
    <linearGradient id="edM" x1="0" y1="0" x2="0" y2="1"><stop offset="0" stop-color="#1a8fe0"/><stop offset="1" stop-color="#0d78d4"/></linearGradient>
    <linearGradient id="edD" x1="0" y1="0" x2="1" y2="1"><stop offset="0" stop-color="#0f5aa8"/><stop offset="1" stop-color="#124e96"/></linearGradient>
  </defs>
  <path d="M0.5 24 C0.5 11 11 0.5 24 0.5 L24 20 C19 20 13 25 13 31 L14 48 C6 45 0.5 36 0.5 24 Z" fill="url(#edM)"/>
  <path d="M0.5 22 C1.5 10 11.5 0.5 24 0.5 C37 0.5 47.5 10 47.5 22.5 C47.5 30 42 33 36.5 33 C32 33 28.5 31 28.5 27.5 C28.5 25 30 23.5 30.5 22 C31 19.5 28 13.5 20 13.5 C11 13.5 4 17 0.5 22 Z" fill="url(#edG)"/>
  <path d="M13 31 C13.5 22 19 18.5 24 18.5 C19.5 20.5 17.5 24 18 28 C18.8 34 25 36.5 31 36.5 C36 36.5 40 35 44.5 32 C41 42 33 48 24 48 C19 48 15 46 14 43 C13 40 12.8 35 13 31 Z" fill="url(#edD)"/>
  <path d="M24 18.5 C28 18 30.8 20.5 30.5 22.5 C30 24 28.5 25.5 28.5 27.5 C28.5 30.5 31 32.5 34 33.5 C31 36.5 24.5 36 20.5 33 C17.5 30.5 17 26 18.5 23 C19.8 20.3 21.8 18.8 24 18.5 Z" fill="#939fa7"/>
</svg>
<svg class="abs" style="left:13px;top:142px" width="14" height="13" viewBox="0 0 14 13">
  <rect x="0.5" y="0.5" width="13" height="12" fill="#fff"/>
  <path d="M4 10 L9.5 4.5 M5.5 4 L10 4 L10 8.5" stroke="#1c64c8" stroke-width="1.8" fill="none"/>
</svg>
<div class="dlabel" style="left:0;top:158px;width:76px;">Microsoft<br>Edge</div>
<div id="shadow"></div>
<div id="win">
  <div id="title">
    <svg class="abs" style="left:7px;top:7px" width="18" height="14" viewBox="0 0 18 14">
      <defs><linearGradient id="psG" x1="0" y1="0" x2="1" y2="1"><stop offset="0" stop-color="#5391ef"/><stop offset="1" stop-color="#2a62c9"/></linearGradient></defs>
      <path d="M4 1 L17.5 1 L14 13 L0.5 13 Z" fill="url(#psG)"/>
      <path d="M4 3.5 L8.5 7 L3.2 10.8" stroke="#fff" stroke-width="1.6" fill="none" stroke-linecap="round" stroke-linejoin="round"/>
      <path d="M8.2 11 L12 11" stroke="#fff" stroke-width="1.6" stroke-linecap="round"/>
    </svg>
    <div class="t">Administrator: Windows PowerShell</div>
    <svg class="abs" style="left:1210px;top:0" width="127" height="30" viewBox="0 0 127 30">
      <path d="M8 14.5 L18 14.5" stroke="#a8a8a8" stroke-width="1"/>
      <rect x="53.5" y="9.5" width="9" height="9.5" rx="1" fill="none" stroke="#a8a8a8" stroke-width="1"/>
      <path d="M99 9 L109 19 M109 9 L99 19" stroke="#a8a8a8" stroke-width="1"/>
    </svg>
  </div>
  <div id="term"><pre>PS C:\WINDOWS\system32&gt; <span class="y">Set-DnsClientServerAddress</span> <span class="g">-InterfaceAlias</span> <span class="b">"Ethernet"</span> <span class="g">-ServerAddresses</span> <span class="b">"192.168.0.220"</span>
PS C:\WINDOWS\system32&gt; <span class="y">ping</span> itlab.local

Pinging itlab.local [192.168.0.220] with 32 bytes of data:
Reply from 192.168.0.220: bytes=32 time=2ms TTL=128
Reply from 192.168.0.220: bytes=32 time=2ms TTL=128
Reply from 192.168.0.220: bytes=32 time=2ms TTL=128
Reply from 192.168.0.220: bytes=32 time=2ms TTL=128

Ping statistics for 192.168.0.220:
    Packets: Sent = 4, Received = 4, Lost = 0 (0% loss),
Approximate round trip times in milli-seconds:
    Minimum = 2ms, Maximum = 2ms, Average = 2ms
PS C:\WINDOWS\system32&gt;</pre></div>
  <div id="sb"><div id="thumb"></div></div>
</div>
<div id="taskbar"></div>
<!-- start -->
<svg class="abs" style="left:705px;top:1045px" width="23" height="23" viewBox="0 0 23 23">
  <defs><linearGradient id="wG" x1="0" y1="0" x2="1" y2="1"><stop offset="0" stop-color="#7dd3fb"/><stop offset="0.5" stop-color="#29b6fa"/><stop offset="1" stop-color="#0b9cf6"/></linearGradient></defs>
  <rect x="0" y="0" width="11" height="11" rx="1" fill="url(#wG)"/>
  <rect x="12" y="0" width="11" height="11" rx="1" fill="url(#wG)"/>
  <rect x="0" y="12" width="11" height="11" rx="1" fill="url(#wG)"/>
  <rect x="12" y="12" width="11" height="11" rx="1" fill="url(#wG)"/>
</svg>
<!-- search -->
<div id="search"><div class="t">Search</div></div>
<svg class="abs" style="left:750px;top:1046px" width="20" height="20" viewBox="0 0 20 20">
  <circle cx="8.8" cy="8.8" r="5.6" fill="none" stroke="#e8e2e2" stroke-width="1.6"/>
  <path d="M13 13 L17 17" stroke="#e8e2e2" stroke-width="1.8" stroke-linecap="round"/>
</svg>
<svg class="abs" style="left:908px;top:1042px" width="48" height="27" viewBox="0 0 48 27">
  <defs>
    <linearGradient id="pandaBg" x1="0" y1="0" x2="0" y2="1"><stop offset="0" stop-color="#a6dbe2"/><stop offset="0.45" stop-color="#e9e4c0"/><stop offset="0.8" stop-color="#f3dba5"/><stop offset="1" stop-color="#a9c98a"/></linearGradient>
  </defs>
  <ellipse cx="24" cy="14" rx="23.3" ry="12.3" fill="url(#pandaBg)"/>
  <rect x="8" y="1" width="2.2" height="23" fill="#5fb030"/>
  <rect x="40" y="2" width="2.2" height="22" fill="#5fb030"/>
  <path d="M3.5 5.5 L8 8 M6 4 L8.5 7.5 M10.5 15 L13.5 12.5 M11 18 L14 17 M37 6 L40 9 M37.5 11 L40 13 M42.5 16 L46 14" stroke="#7dbe45" stroke-width="1.3" stroke-linecap="round"/>
  <path d="M15 6.5 L18 11 M16.5 8 L20 7.5" stroke="#82c24c" stroke-width="1.8" stroke-linecap="round"/>
  <ellipse cx="24" cy="24.5" rx="17" ry="2.2" fill="#a9c98a" opacity="0.8"/>
  <ellipse cx="27" cy="18.5" rx="7" ry="7" fill="#f1e6d4"/>
  <ellipse cx="32" cy="17" rx="3.8" ry="6.8" transform="rotate(25 32 17)" fill="#2e3546"/>
  <ellipse cx="20" cy="14.5" rx="2.8" ry="2.6" fill="#2e3546"/>
  <path d="M19 12.5 L24 14.5 L26 12.5 L30 12" stroke="#2e3546" stroke-width="2.4" fill="none"/>
  <ellipse cx="21" cy="22" rx="4" ry="3" fill="#2e3546"/>
  <ellipse cx="31" cy="23" rx="5" ry="3" fill="#2e3546"/>
  <circle cx="25.3" cy="7.8" r="5.6" fill="#f4e9d8"/>
  <circle cx="21" cy="3.6" r="1.9" fill="#2e3546"/>
  <circle cx="29.5" cy="4.2" r="1.9" fill="#2e3546"/>
  <ellipse cx="22.8" cy="8.3" rx="1.3" ry="1.7" fill="#2e3546"/>
  <ellipse cx="27.2" cy="8.4" rx="1.3" ry="1.7" fill="#2e3546"/>
  <circle cx="23" cy="10.8" r="0.8" fill="#2e3546"/>
</svg>
<!-- task view -->
<svg class="abs" style="left:973px;top:1044px" width="25" height="23" viewBox="0 0 25 23">
  <defs>
    <linearGradient id="tvB" x1="0" y1="0" x2="1" y2="1"><stop offset="0" stop-color="#8a8a8a"/><stop offset="1" stop-color="#5e5e5e"/></linearGradient>
    <linearGradient id="tvF" x1="0" y1="0" x2="1" y2="1"><stop offset="0" stop-color="#ffffff"/><stop offset="1" stop-color="#d9d9d9"/></linearGradient>
  </defs>
  <rect x="0" y="7" width="18" height="16" rx="1.5" fill="url(#tvB)"/>
  <rect x="6" y="1" width="18" height="16" rx="1.5" fill="url(#tvF)" opacity="0.96"/>
  <rect x="6" y="7" width="12" height="10" rx="1" fill="#a9a9a9" opacity="0.85"/>
</svg>
<!-- copilot -->
<svg class="abs" style="left:1017px;top:1045px" width="24" height="22" viewBox="0 0 24 22">
  <defs>
    <linearGradient id="cpL" x1="0" y1="0" x2="0" y2="1"><stop offset="0" stop-color="#22b4ff"/><stop offset="0.35" stop-color="#1b93d8"/><stop offset="0.65" stop-color="#55b25a"/><stop offset="1" stop-color="#f2d000"/></linearGradient>
    <linearGradient id="cpR" x1="0" y1="0" x2="0" y2="1"><stop offset="0" stop-color="#b84ff0"/><stop offset="0.5" stop-color="#ee5a9a"/><stop offset="1" stop-color="#ffb45a"/></linearGradient>
  </defs>
  <path d="M11.5 1 L16.5 1 C17.5 1 18 1.6 18.3 2.5 L19.5 6.8 L13.2 6.8 Z" fill="#1f55d6"/>
  <path d="M6.5 14.5 L10 14.5 L12.6 15 L11 21 L8 21 C7.2 21 6.8 20.5 6.6 19.8 Z" fill="#f2603a"/>
  <path d="M5.6 1 L13 1 L9.2 15 L2.6 15 C1.4 15 0.9 14.2 1.2 13 L4.2 2.6 C4.5 1.6 5 1 5.6 1 Z" fill="url(#cpL)"/>
  <path d="M15 6.8 L21.8 6.8 C22.9 6.8 23.3 7.7 23 8.8 L19.6 19.8 C19.3 20.6 18.8 21 18 21 L10.5 21 Z" fill="url(#cpR)"/>
</svg>
<!-- explorer -->
<svg class="abs" style="left:1061px;top:1045px" width="25" height="22" viewBox="0 0 25 22">
  <defs><linearGradient id="fdG" x1="0" y1="0" x2="0" y2="1"><stop offset="0" stop-color="#ffe17a"/><stop offset="1" stop-color="#f7c22a"/></linearGradient></defs>
  <path d="M0 2 C0 1 1 0 2 0 L8 0 L10.5 2.5 L23 2.5 C24 2.5 24.5 3 24.5 4 L24.5 20 C24.5 21 24 21.5 23 21.5 L1.5 21.5 C0.5 21.5 0 21 0 20 Z" fill="#e3a51a"/>
  <path d="M0 5 L9 5 L11 3 L23 3 C24 3 24.5 3.5 24.5 4.5 L24.5 20 C24.5 21 24 21.5 23 21.5 L1.5 21.5 C0.5 21.5 0 21 0 20 Z" fill="url(#fdG)"/>
  <rect x="5" y="15" width="14.5" height="6.5" rx="2" fill="#1a7fd8"/>
  <rect x="8" y="17.5" width="8.5" height="1.3" fill="#0f5fb0"/>
</svg>
<!-- edge -->
<svg class="abs" style="left:1105px;top:1044px" width="24" height="24" viewBox="0 0 48 48">
  <defs>
    <linearGradient id="edG2" x1="0" y1="0" x2="1" y2="0.6"><stop offset="0" stop-color="#36c0f0"/><stop offset="0.5" stop-color="#2ec4c8"/><stop offset="1" stop-color="#6ae05a"/></linearGradient>
    <linearGradient id="edM2" x1="0" y1="0" x2="0" y2="1"><stop offset="0" stop-color="#1a8fe0"/><stop offset="1" stop-color="#0d78d4"/></linearGradient>
    <linearGradient id="edD2" x1="0" y1="0" x2="1" y2="1"><stop offset="0" stop-color="#0f5aa8"/><stop offset="1" stop-color="#124e96"/></linearGradient>
  </defs>
  <path d="M0.5 24 C0.5 11 11 0.5 24 0.5 L24 20 C19 20 13 25 13 31 L14 48 C6 45 0.5 36 0.5 24 Z" fill="url(#edM2)"/>
  <path d="M0.5 22 C1.5 10 11.5 0.5 24 0.5 C37 0.5 47.5 10 47.5 22.5 C47.5 30 42 33 36.5 33 C32 33 28.5 31 28.5 27.5 C28.5 25 30 23.5 30.5 22 C31 19.5 28 13.5 20 13.5 C11 13.5 4 17 0.5 22 Z" fill="url(#edG2)"/>
  <path d="M13 31 C13.5 22 19 18.5 24 18.5 C19.5 20.5 17.5 24 18 28 C18.8 34 25 36.5 31 36.5 C36 36.5 40 35 44.5 32 C41 42 33 48 24 48 C19 48 15 46 14 43 C13 40 12.8 35 13 31 Z" fill="url(#edD2)"/>
  <path d="M24 18.5 C28 18 30.8 20.5 30.5 22.5 C30 24 28.5 25.5 28.5 27.5 C28.5 30.5 31 32.5 34 33.5 C31 36.5 24.5 36 20.5 33 C17.5 30.5 17 26 18.5 23 C19.8 20.3 21.8 18.8 24 18.5 Z" fill="#322323"/>
</svg>
<!-- store -->
<svg class="abs" style="left:1148px;top:1044px" width="25" height="25" viewBox="0 0 25 25">
  <path d="M6.5 6 L6.5 2.5 C6.5 1.5 7 1 8 1 L17 1 C18 1 18.5 1.5 18.5 2.5 L18.5 6" fill="none" stroke="#1fb1ef" stroke-width="2"/>
  <path d="M1 5.5 C1 5 1.5 4.5 2 4.5 L23 4.5 C23.5 4.5 24 5 24 5.5 L24 21 C24 23 23 24 21 24 L4 24 C2 24 1 23 1 21 Z" fill="#f4f4f4"/>
  <rect x="8" y="10" width="4" height="4" fill="#f25022"/>
  <rect x="13" y="10" width="4" height="4" fill="#7fba00"/>
  <rect x="8" y="15" width="4" height="4" fill="#00a4ef"/>
  <rect x="13" y="15" width="4" height="4" fill="#ffb900"/>
</svg>
<!-- powershell -->
<svg class="abs" style="left:1193px;top:1046px" width="24" height="19" viewBox="0 0 24 19">
  <path d="M5.5 0.5 L24 0.5 L18.5 18.5 L0 18.5 Z" fill="url(#psG)"/>
  <path d="M7 4.5 L12.5 9.5 L6 14.5" stroke="#fff" stroke-width="1.7" fill="none" stroke-linecap="round" stroke-linejoin="round"/>
  <path d="M11.5 15 L16.5 15" stroke="#fff" stroke-width="2" stroke-linecap="round"/>
</svg>
<div class="abs" style="left:1202px;top:1072px;width:6px;height:3px;border-radius:2px;background:#9f9a9a;"></div>
<!-- tray -->
<svg class="abs" style="left:1700px;top:1046px" width="200" height="22" viewBox="0 0 200 22">
  <path d="M4 12.5 L9 7.5 L14 12.5" fill="none" stroke="#fff" stroke-width="1.3"/>
  <path d="M34 15.5 C32 15.5 32 11.5 35 11.5 C35.5 8 39 6.5 42 8.5 C44 6.5 48 8 48 11 C50 11 51 15.5 48 15.5 Z" fill="#8a8484"/>
  <path d="M35 5.5 L47.5 17.5" stroke="#e6e2e2" stroke-width="1.2"/>
  <rect x="65" y="3" width="12" height="10" fill="none" stroke="#fff" stroke-width="1.2"/>
  <path d="M67 17 L75 17 M71 13 L71 17" stroke="#fff" stroke-width="1.2"/>
  <rect x="76" y="1.5" width="4" height="5" fill="#322323" stroke="#fff" stroke-width="1.1"/>
  <path d="M78 6.5 L78 18" stroke="#fff" stroke-width="1.1"/>
  <path d="M90 7.5 L93 7.5 L97 4 L97 17 L93 13.5 L90 13.5 Z" fill="none" stroke="#fff" stroke-width="1.1"/>
  <path d="M99.5 8 C101 9.5 101 11.5 99.5 13 M102 6 C104.5 8.5 104.5 12.5 102 15 M104.5 4 C108 7.5 108 13.5 104.5 17" fill="none" stroke="#fff" stroke-width="1.1"/>
  <path d="M185.5 15 L187.2 12.6 L187.2 9 C187.2 5.3 189.2 3.2 192 3.2 C194.8 3.2 196.8 5.3 196.8 9 L196.8 12.6 L198.5 15 Z" fill="#fff"/>
  <rect x="190" y="15.8" width="4" height="2.2" rx="1.1" fill="#fff"/>
  <path d="M189.2 8.6 L193 8.6 L189.2 12.4 L193 12.4" fill="none" stroke="#322323" stroke-width="1.1"/>
  <path d="M194.5 1.6 L198.6 1.6 L194.5 6.2 L198.6 6.2" fill="none" stroke="#322323" stroke-width="2.6"/>
  <path d="M194.5 1.6 L198.6 1.6 L194.5 6.2 L198.6 6.2" fill="none" stroke="#fff" stroke-width="1.1"/>
</svg>
<div class="tray" style="left:1810px;top:1041px;width:67px;line-height:16px;">5:08 PM<br>3/16/2026</div>
</body></html>
